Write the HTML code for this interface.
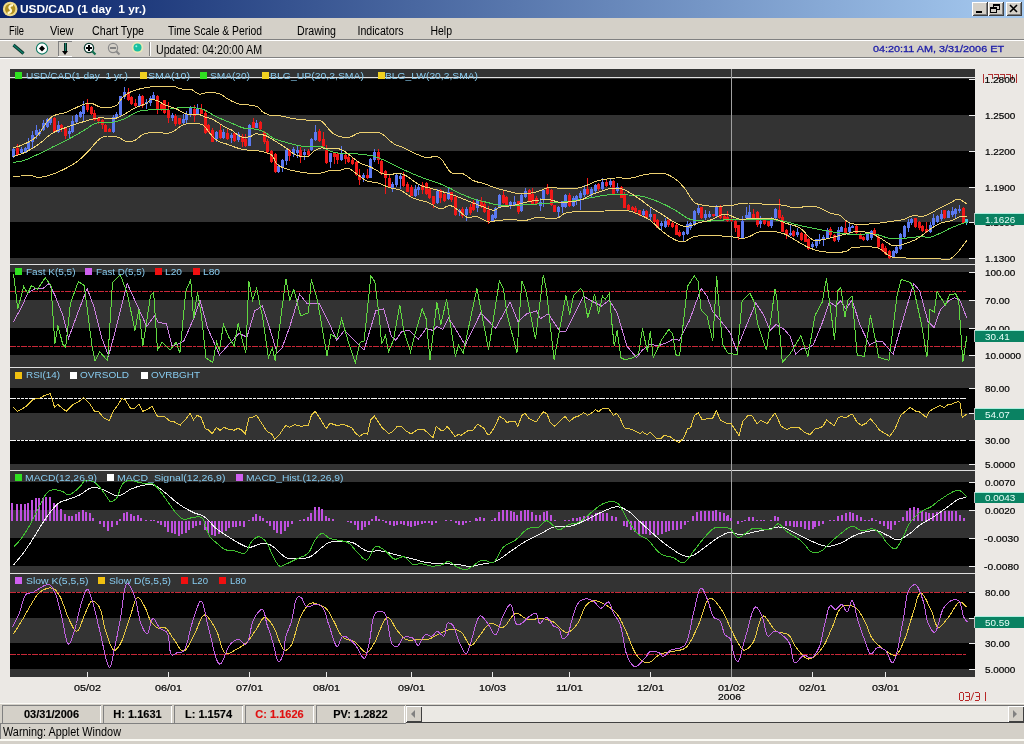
<!DOCTYPE html>
<html><head><meta charset="utf-8"><title>USD/CAD</title>
<style>
html,body{margin:0;padding:0;width:1024px;height:744px;overflow:hidden;background:#ebe8e4;}
svg{display:block;position:absolute;left:0;top:0;will-change:transform;}
text{font-family:'Liberation Sans', sans-serif;}
</style></head><body>
<svg width="1024" height="744" viewBox="0 0 1024 744" shape-rendering="crispEdges">
<defs>
<linearGradient id="tg" x1="0" x2="1" y1="0" y2="0"><stop offset="0" stop-color="#0a246a"/><stop offset="1" stop-color="#a6caf0"/></linearGradient>
<radialGradient id="coin" cx="0.4" cy="0.35" r="0.7"><stop offset="0" stop-color="#fff4a0"/><stop offset="0.6" stop-color="#d8b030"/><stop offset="1" stop-color="#8a6a10"/></radialGradient>
<radialGradient id="ball" cx="0.45" cy="0.4" r="0.6"><stop offset="0" stop-color="#60e8c8"/><stop offset="0.7" stop-color="#20b090"/><stop offset="1" stop-color="#f0f0a0"/></radialGradient>
</defs>

<rect x="0" y="0" width="1024" height="18" fill="url(#tg)"/>
<g shape-rendering="geometricPrecision"><circle cx="10.2" cy="9" r="7.3" fill="#f0dc88"/><circle cx="10.2" cy="9" r="5.2" fill="#b09020"/>
<path d="M13,5.2 C9.5,5.2 8.6,7.6 10.2,9 C11.8,10.4 11.2,12.6 7.6,13" stroke="#fff8d0" stroke-width="2.3" fill="none"/></g>
<text x="20" y="13" font-size="11" font-weight="bold" fill="#ffffff" textLength="126" lengthAdjust="spacingAndGlyphs">USD/CAD (1 day&#160; 1 yr.)</text>
<rect x="972" y="2" width="16" height="14" fill="#d4d0c8"/>
<path d="M972,16 V2 H988" stroke="#ffffff" fill="none"/>
<path d="M972.5,15.5 H987.5 V2" stroke="#404040" fill="none"/>
<path d="M973.5,14.5 H986.5 V3" stroke="#808080" fill="none"/>
<rect x="988" y="2" width="16" height="14" fill="#d4d0c8"/>
<path d="M988,16 V2 H1004" stroke="#ffffff" fill="none"/>
<path d="M988.5,15.5 H1003.5 V2" stroke="#404040" fill="none"/>
<path d="M989.5,14.5 H1002.5 V3" stroke="#808080" fill="none"/>
<rect x="1006" y="2" width="16" height="14" fill="#d4d0c8"/>
<path d="M1006,16 V2 H1022" stroke="#ffffff" fill="none"/>
<path d="M1006.5,15.5 H1021.5 V2" stroke="#404040" fill="none"/>
<path d="M1007.5,14.5 H1020.5 V3" stroke="#808080" fill="none"/>
<rect x="976" y="11" width="6" height="2" fill="#000"/>
<rect x="993" y="4" width="6" height="5" fill="none" stroke="#000" stroke-width="1"/><rect x="993" y="4" width="6" height="1.5" fill="#000"/>
<rect x="990.5" y="7.5" width="6" height="5" fill="#d4d0c8" stroke="#000" stroke-width="1"/><rect x="990" y="7" width="7" height="1.5" fill="#000"/>
<path d="M1010,5 L1017,12 M1017,5 L1010,12" stroke="#000" stroke-width="1.6" shape-rendering="geometricPrecision"/>
<rect x="0" y="18" width="1024" height="21" fill="#d4d0c8"/>
<rect x="0" y="39" width="1024" height="1" fill="#808080"/><rect x="0" y="40" width="1024" height="1" fill="#ffffff"/>
<text x="9" y="34.5" font-size="12" fill="#000" textLength="15.0" lengthAdjust="spacingAndGlyphs">File</text>
<text x="50" y="34.5" font-size="12" fill="#000" textLength="23.5" lengthAdjust="spacingAndGlyphs">View</text>
<text x="92" y="34.5" font-size="12" fill="#000" textLength="52.0" lengthAdjust="spacingAndGlyphs">Chart Type</text>
<text x="168" y="34.5" font-size="12" fill="#000" textLength="94.0" lengthAdjust="spacingAndGlyphs">Time Scale &amp; Period</text>
<text x="297" y="34.5" font-size="12" fill="#000" textLength="39.0" lengthAdjust="spacingAndGlyphs">Drawing</text>
<text x="357.5" y="34.5" font-size="12" fill="#000" textLength="46.0" lengthAdjust="spacingAndGlyphs">Indicators</text>
<text x="430.5" y="34.5" font-size="12" fill="#000" textLength="21.5" lengthAdjust="spacingAndGlyphs">Help</text>
<rect x="0" y="41" width="1024" height="16" fill="#d4d0c8"/>
<rect x="0" y="57" width="1024" height="1" fill="#808080"/><rect x="0" y="58" width="1024" height="1" fill="#ffffff"/>
<path d="M13.5,45 L23.5,53.5" stroke="#0a3028" stroke-width="3.2" shape-rendering="geometricPrecision"/>
<path d="M13.5,45 L23.5,53.5" stroke="#10806a" stroke-width="1.6" shape-rendering="geometricPrecision"/>
<circle cx="42" cy="48.5" r="5.6" fill="#fff" stroke="#107a64" stroke-width="1.1" shape-rendering="geometricPrecision"/>
<path d="M42,45.5 L45,48.5 L42,51.5 L39,48.5 Z" fill="#000" shape-rendering="geometricPrecision"/>
<path d="M58.5,56 V41.5 H72" stroke="#808080" fill="none"/><path d="M58,56.5 H72" stroke="#fff"/>
<rect x="63.5" y="43" width="3" height="9" fill="#0a2a22"/><rect x="64.5" y="43" width="1" height="9" fill="#18806a"/>
<path d="M62,51 H68 L65,55 Z" fill="#000" shape-rendering="geometricPrecision"/>
<circle cx="89" cy="48" r="4.6" fill="#fff" stroke="#0a3a30" stroke-width="1.3" shape-rendering="geometricPrecision"/>
<rect x="86" y="47" width="6" height="2" fill="#000"/><rect x="88" y="45" width="2" height="6" fill="#000"/>
<path d="M92,51 L95.5,54.5" stroke="#107050" stroke-width="2.2" shape-rendering="geometricPrecision"/>
<circle cx="113" cy="48" r="4.6" fill="none" stroke="#8a8a8a" stroke-width="1.2" shape-rendering="geometricPrecision"/><rect x="110" y="47" width="6" height="2" fill="#808080"/>
<path d="M116.2,51.2 L119.5,54.5" stroke="#8a8a8a" stroke-width="2" shape-rendering="geometricPrecision"/>
<circle cx="137.5" cy="47.5" r="5.8" fill="#f4f0b0" opacity="0.7" shape-rendering="geometricPrecision"/>
<circle cx="137.5" cy="47.5" r="4" fill="#18c0a0" shape-rendering="geometricPrecision"/><circle cx="136.3" cy="46.3" r="1" fill="#a0f0e0" shape-rendering="geometricPrecision"/>
<rect x="149" y="42" width="1" height="14" fill="#808080"/><rect x="150" y="42" width="1" height="14" fill="#fff"/>
<text x="156" y="54" font-size="12" fill="#000" textLength="106" lengthAdjust="spacingAndGlyphs">Updated: 04:20:00 AM</text>
<text x="873" y="51.6" font-size="9.2" fill="#1c1ca8" stroke="#1c1ca8" stroke-width="0.3" textLength="131" lengthAdjust="spacingAndGlyphs">04:20:11 AM, 3/31/2006 ET</text>
<rect x="10" y="69" width="965" height="608" fill="#000"/>
<rect x="10" y="69" width="965" height="10" fill="#333333"/>
<rect x="10" y="115" width="965" height="36" fill="#333333"/>
<rect x="10" y="187" width="965" height="35" fill="#333333"/>
<rect x="10" y="258" width="965" height="6" fill="#333333"/>
<rect x="10" y="264" width="965" height="8" fill="#333333"/>
<rect x="10" y="300" width="965" height="28" fill="#333333"/>
<rect x="10" y="355" width="965" height="12" fill="#333333"/>
<rect x="10" y="367" width="965" height="21" fill="#333333"/>
<rect x="10" y="413" width="965" height="27" fill="#333333"/>
<rect x="10" y="464" width="965" height="6" fill="#333333"/>
<rect x="10" y="470" width="965" height="12" fill="#333333"/>
<rect x="10" y="510" width="965" height="28" fill="#333333"/>
<rect x="10" y="566" width="965" height="7" fill="#333333"/>
<rect x="10" y="573" width="965" height="19" fill="#333333"/>
<rect x="10" y="618" width="965" height="25" fill="#333333"/>
<rect x="10" y="669" width="965" height="8" fill="#333333"/>
<rect x="10" y="77" width="965" height="1" fill="#e0e0e0"/>
<rect x="10" y="264" width="965" height="1" fill="#e0e0e0"/>
<rect x="10" y="367" width="965" height="1" fill="#e0e0e0"/>
<rect x="10" y="470" width="965" height="1" fill="#e0e0e0"/>
<rect x="10" y="573" width="965" height="1" fill="#e0e0e0"/>
<rect x="731" y="69" width="1" height="608" fill="#a0a0a0"/>
<rect x="87" y="672" width="1" height="5" fill="#e8e8e8"/>
<rect x="168" y="672" width="1" height="5" fill="#e8e8e8"/>
<rect x="249" y="672" width="1" height="5" fill="#e8e8e8"/>
<rect x="326" y="672" width="1" height="5" fill="#e8e8e8"/>
<rect x="411" y="672" width="1" height="5" fill="#e8e8e8"/>
<rect x="492" y="672" width="1" height="5" fill="#e8e8e8"/>
<rect x="569" y="672" width="1" height="5" fill="#e8e8e8"/>
<rect x="650" y="672" width="1" height="5" fill="#e8e8e8"/>
<rect x="812" y="672" width="1" height="5" fill="#e8e8e8"/>
<rect x="885" y="672" width="1" height="5" fill="#e8e8e8"/>
<rect x="969" y="79" width="6" height="1" fill="#f0f0f0"/>
<rect x="969" y="115" width="6" height="1" fill="#f0f0f0"/>
<rect x="969" y="151" width="6" height="1" fill="#f0f0f0"/>
<rect x="969" y="187" width="6" height="1" fill="#f0f0f0"/>
<rect x="969" y="222" width="6" height="1" fill="#f0f0f0"/>
<rect x="969" y="258" width="6" height="1" fill="#f0f0f0"/>
<rect x="969" y="272" width="6" height="1" fill="#f0f0f0"/>
<rect x="969" y="300" width="6" height="1" fill="#f0f0f0"/>
<rect x="969" y="328" width="6" height="1" fill="#f0f0f0"/>
<rect x="969" y="355" width="6" height="1" fill="#f0f0f0"/>
<rect x="969" y="388" width="6" height="1" fill="#f0f0f0"/>
<rect x="969" y="413" width="6" height="1" fill="#f0f0f0"/>
<rect x="969" y="440" width="6" height="1" fill="#f0f0f0"/>
<rect x="969" y="464" width="6" height="1" fill="#f0f0f0"/>
<rect x="969" y="482" width="6" height="1" fill="#f0f0f0"/>
<rect x="969" y="510" width="6" height="1" fill="#f0f0f0"/>
<rect x="969" y="538" width="6" height="1" fill="#f0f0f0"/>
<rect x="969" y="566" width="6" height="1" fill="#f0f0f0"/>
<rect x="969" y="592" width="6" height="1" fill="#f0f0f0"/>
<rect x="969" y="618" width="6" height="1" fill="#f0f0f0"/>
<rect x="969" y="643" width="6" height="1" fill="#f0f0f0"/>
<rect x="969" y="669" width="6" height="1" fill="#f0f0f0"/>
<g shape-rendering="crispEdges">
<rect x="13" y="148" width="1" height="10" fill="#5a78f0"/>
<rect x="12" y="149" width="3" height="8" fill="#5a78f0"/>
<rect x="17" y="144" width="1" height="12" fill="#f01818"/>
<rect x="16" y="148" width="3" height="7" fill="#f01818"/>
<rect x="21" y="147" width="1" height="7" fill="#5a78f0"/>
<rect x="20" y="149" width="3" height="4" fill="#5a78f0"/>
<rect x="25" y="147" width="1" height="6" fill="#5a78f0"/>
<rect x="24" y="148" width="3" height="5" fill="#5a78f0"/>
<rect x="28" y="138" width="1" height="12" fill="#5a78f0"/>
<rect x="27" y="142" width="3" height="7" fill="#5a78f0"/>
<rect x="32" y="131" width="1" height="17" fill="#5a78f0"/>
<rect x="31" y="135" width="3" height="7" fill="#5a78f0"/>
<rect x="36" y="125" width="1" height="14" fill="#5a78f0"/>
<rect x="35" y="130" width="3" height="5" fill="#5a78f0"/>
<rect x="39" y="129" width="1" height="7" fill="#5a78f0"/>
<rect x="38" y="132" width="3" height="2" fill="#5a78f0"/>
<rect x="43" y="120" width="1" height="11" fill="#5a78f0"/>
<rect x="42" y="123" width="3" height="7" fill="#5a78f0"/>
<rect x="47" y="118" width="1" height="10" fill="#5a78f0"/>
<rect x="46" y="119" width="3" height="8" fill="#5a78f0"/>
<rect x="50" y="117" width="1" height="8" fill="#5a78f0"/>
<rect x="49" y="118" width="3" height="5" fill="#5a78f0"/>
<rect x="54" y="117" width="1" height="15" fill="#f01818"/>
<rect x="53" y="118" width="3" height="14" fill="#f01818"/>
<rect x="58" y="121" width="1" height="12" fill="#5a78f0"/>
<rect x="57" y="125" width="3" height="7" fill="#5a78f0"/>
<rect x="61" y="124" width="1" height="8" fill="#f01818"/>
<rect x="60" y="125" width="3" height="3" fill="#f01818"/>
<rect x="65" y="128" width="1" height="11" fill="#f01818"/>
<rect x="64" y="128" width="3" height="8" fill="#f01818"/>
<rect x="69" y="128" width="1" height="10" fill="#5a78f0"/>
<rect x="68" y="131" width="3" height="3" fill="#5a78f0"/>
<rect x="72" y="116" width="1" height="17" fill="#5a78f0"/>
<rect x="71" y="121" width="3" height="11" fill="#5a78f0"/>
<rect x="76" y="114" width="1" height="10" fill="#5a78f0"/>
<rect x="75" y="115" width="3" height="7" fill="#5a78f0"/>
<rect x="80" y="111" width="1" height="7" fill="#5a78f0"/>
<rect x="79" y="112" width="3" height="5" fill="#5a78f0"/>
<rect x="83" y="101" width="1" height="20" fill="#5a78f0"/>
<rect x="82" y="106" width="3" height="8" fill="#5a78f0"/>
<rect x="87" y="99" width="1" height="13" fill="#f01818"/>
<rect x="86" y="104" width="3" height="6" fill="#f01818"/>
<rect x="91" y="106" width="1" height="9" fill="#f01818"/>
<rect x="90" y="107" width="3" height="7" fill="#f01818"/>
<rect x="94" y="110" width="1" height="11" fill="#f01818"/>
<rect x="93" y="113" width="3" height="7" fill="#f01818"/>
<rect x="98" y="117" width="1" height="7" fill="#f01818"/>
<rect x="97" y="118" width="3" height="3" fill="#f01818"/>
<rect x="102" y="119" width="1" height="10" fill="#f01818"/>
<rect x="101" y="120" width="3" height="5" fill="#f01818"/>
<rect x="105" y="124" width="1" height="8" fill="#f01818"/>
<rect x="104" y="125" width="3" height="7" fill="#f01818"/>
<rect x="109" y="128" width="1" height="4" fill="#f01818"/>
<rect x="108" y="129" width="3" height="3" fill="#f01818"/>
<rect x="113" y="115" width="1" height="18" fill="#5a78f0"/>
<rect x="112" y="117" width="3" height="15" fill="#5a78f0"/>
<rect x="116" y="112" width="1" height="6" fill="#5a78f0"/>
<rect x="115" y="114" width="3" height="4" fill="#5a78f0"/>
<rect x="120" y="96" width="1" height="20" fill="#5a78f0"/>
<rect x="119" y="96" width="3" height="19" fill="#5a78f0"/>
<rect x="124" y="87" width="1" height="12" fill="#5a78f0"/>
<rect x="123" y="92" width="3" height="5" fill="#5a78f0"/>
<rect x="128" y="88" width="1" height="13" fill="#f01818"/>
<rect x="127" y="92" width="3" height="8" fill="#f01818"/>
<rect x="131" y="96" width="1" height="9" fill="#f01818"/>
<rect x="130" y="97" width="3" height="7" fill="#f01818"/>
<rect x="135" y="99" width="1" height="8" fill="#f01818"/>
<rect x="134" y="103" width="3" height="3" fill="#f01818"/>
<rect x="139" y="94" width="1" height="13" fill="#5a78f0"/>
<rect x="138" y="96" width="3" height="10" fill="#5a78f0"/>
<rect x="142" y="95" width="1" height="13" fill="#f01818"/>
<rect x="141" y="96" width="3" height="10" fill="#f01818"/>
<rect x="146" y="99" width="1" height="10" fill="#5a78f0"/>
<rect x="145" y="102" width="3" height="2" fill="#5a78f0"/>
<rect x="150" y="96" width="1" height="10" fill="#5a78f0"/>
<rect x="149" y="98" width="3" height="5" fill="#5a78f0"/>
<rect x="153" y="92" width="1" height="8" fill="#5a78f0"/>
<rect x="152" y="95" width="3" height="5" fill="#5a78f0"/>
<rect x="157" y="95" width="1" height="19" fill="#f01818"/>
<rect x="156" y="96" width="3" height="14" fill="#f01818"/>
<rect x="161" y="103" width="1" height="8" fill="#f01818"/>
<rect x="160" y="104" width="3" height="5" fill="#f01818"/>
<rect x="164" y="100" width="1" height="14" fill="#f01818"/>
<rect x="163" y="100" width="3" height="13" fill="#f01818"/>
<rect x="168" y="102" width="1" height="21" fill="#f01818"/>
<rect x="167" y="110" width="3" height="8" fill="#f01818"/>
<rect x="172" y="113" width="1" height="8" fill="#5a78f0"/>
<rect x="171" y="115" width="3" height="3" fill="#5a78f0"/>
<rect x="175" y="114" width="1" height="12" fill="#f01818"/>
<rect x="174" y="116" width="3" height="8" fill="#f01818"/>
<rect x="179" y="118" width="1" height="7" fill="#f01818"/>
<rect x="178" y="118" width="3" height="6" fill="#f01818"/>
<rect x="183" y="114" width="1" height="11" fill="#5a78f0"/>
<rect x="182" y="119" width="3" height="4" fill="#5a78f0"/>
<rect x="186" y="111" width="1" height="13" fill="#5a78f0"/>
<rect x="185" y="114" width="3" height="6" fill="#5a78f0"/>
<rect x="190" y="106" width="1" height="11" fill="#5a78f0"/>
<rect x="189" y="107" width="3" height="7" fill="#5a78f0"/>
<rect x="194" y="105" width="1" height="17" fill="#f01818"/>
<rect x="193" y="109" width="3" height="7" fill="#f01818"/>
<rect x="197" y="104" width="1" height="11" fill="#5a78f0"/>
<rect x="196" y="109" width="3" height="5" fill="#5a78f0"/>
<rect x="201" y="104" width="1" height="10" fill="#f01818"/>
<rect x="200" y="109" width="3" height="5" fill="#f01818"/>
<rect x="205" y="111" width="1" height="23" fill="#f01818"/>
<rect x="204" y="113" width="3" height="20" fill="#f01818"/>
<rect x="208" y="124" width="1" height="9" fill="#f01818"/>
<rect x="207" y="125" width="3" height="7" fill="#f01818"/>
<rect x="212" y="128" width="1" height="14" fill="#f01818"/>
<rect x="211" y="130" width="3" height="12" fill="#f01818"/>
<rect x="216" y="131" width="1" height="11" fill="#5a78f0"/>
<rect x="215" y="132" width="3" height="7" fill="#5a78f0"/>
<rect x="220" y="124" width="1" height="15" fill="#f01818"/>
<rect x="219" y="130" width="3" height="8" fill="#f01818"/>
<rect x="223" y="129" width="1" height="10" fill="#5a78f0"/>
<rect x="222" y="132" width="3" height="6" fill="#5a78f0"/>
<rect x="227" y="129" width="1" height="11" fill="#f01818"/>
<rect x="226" y="133" width="3" height="6" fill="#f01818"/>
<rect x="231" y="133" width="1" height="10" fill="#5a78f0"/>
<rect x="230" y="135" width="3" height="3" fill="#5a78f0"/>
<rect x="234" y="132" width="1" height="10" fill="#f01818"/>
<rect x="233" y="133" width="3" height="8" fill="#f01818"/>
<rect x="238" y="132" width="1" height="10" fill="#5a78f0"/>
<rect x="237" y="134" width="3" height="6" fill="#5a78f0"/>
<rect x="242" y="134" width="1" height="13" fill="#f01818"/>
<rect x="241" y="136" width="3" height="6" fill="#f01818"/>
<rect x="245" y="134" width="1" height="13" fill="#f01818"/>
<rect x="244" y="139" width="3" height="7" fill="#f01818"/>
<rect x="249" y="124" width="1" height="22" fill="#5a78f0"/>
<rect x="248" y="125" width="3" height="21" fill="#5a78f0"/>
<rect x="253" y="118" width="1" height="10" fill="#f01818"/>
<rect x="252" y="122" width="3" height="6" fill="#f01818"/>
<rect x="256" y="120" width="1" height="8" fill="#5a78f0"/>
<rect x="255" y="123" width="3" height="5" fill="#5a78f0"/>
<rect x="260" y="121" width="1" height="9" fill="#f01818"/>
<rect x="259" y="122" width="3" height="7" fill="#f01818"/>
<rect x="264" y="131" width="1" height="13" fill="#f01818"/>
<rect x="263" y="132" width="3" height="10" fill="#f01818"/>
<rect x="267" y="139" width="1" height="14" fill="#f01818"/>
<rect x="266" y="141" width="3" height="11" fill="#f01818"/>
<rect x="271" y="150" width="1" height="13" fill="#f01818"/>
<rect x="270" y="151" width="3" height="11" fill="#f01818"/>
<rect x="275" y="153" width="1" height="20" fill="#f01818"/>
<rect x="274" y="154" width="3" height="18" fill="#f01818"/>
<rect x="278" y="164" width="1" height="9" fill="#5a78f0"/>
<rect x="277" y="166" width="3" height="6" fill="#5a78f0"/>
<rect x="282" y="159" width="1" height="13" fill="#5a78f0"/>
<rect x="281" y="160" width="3" height="7" fill="#5a78f0"/>
<rect x="286" y="149" width="1" height="16" fill="#5a78f0"/>
<rect x="285" y="150" width="3" height="11" fill="#5a78f0"/>
<rect x="289" y="149" width="1" height="12" fill="#f01818"/>
<rect x="288" y="150" width="3" height="6" fill="#f01818"/>
<rect x="293" y="147" width="1" height="10" fill="#5a78f0"/>
<rect x="292" y="149" width="3" height="5" fill="#5a78f0"/>
<rect x="297" y="146" width="1" height="12" fill="#5a78f0"/>
<rect x="296" y="150" width="3" height="3" fill="#5a78f0"/>
<rect x="300" y="147" width="1" height="16" fill="#f01818"/>
<rect x="299" y="150" width="3" height="7" fill="#f01818"/>
<rect x="304" y="149" width="1" height="11" fill="#5a78f0"/>
<rect x="303" y="152" width="3" height="3" fill="#5a78f0"/>
<rect x="308" y="149" width="1" height="7" fill="#f01818"/>
<rect x="307" y="151" width="3" height="4" fill="#f01818"/>
<rect x="311" y="138" width="1" height="13" fill="#5a78f0"/>
<rect x="310" y="139" width="3" height="11" fill="#5a78f0"/>
<rect x="315" y="125" width="1" height="16" fill="#5a78f0"/>
<rect x="314" y="132" width="3" height="8" fill="#5a78f0"/>
<rect x="319" y="129" width="1" height="13" fill="#f01818"/>
<rect x="318" y="131" width="3" height="10" fill="#f01818"/>
<rect x="323" y="132" width="1" height="16" fill="#f01818"/>
<rect x="322" y="139" width="3" height="7" fill="#f01818"/>
<rect x="326" y="145" width="1" height="19" fill="#f01818"/>
<rect x="325" y="150" width="3" height="13" fill="#f01818"/>
<rect x="330" y="153" width="1" height="15" fill="#5a78f0"/>
<rect x="329" y="153" width="3" height="9" fill="#5a78f0"/>
<rect x="334" y="152" width="1" height="12" fill="#f01818"/>
<rect x="333" y="153" width="3" height="4" fill="#f01818"/>
<rect x="337" y="153" width="1" height="11" fill="#f01818"/>
<rect x="336" y="154" width="3" height="6" fill="#f01818"/>
<rect x="341" y="146" width="1" height="15" fill="#5a78f0"/>
<rect x="340" y="154" width="3" height="6" fill="#5a78f0"/>
<rect x="345" y="153" width="1" height="11" fill="#f01818"/>
<rect x="344" y="155" width="3" height="4" fill="#f01818"/>
<rect x="348" y="154" width="1" height="9" fill="#f01818"/>
<rect x="347" y="157" width="3" height="5" fill="#f01818"/>
<rect x="352" y="157" width="1" height="8" fill="#f01818"/>
<rect x="351" y="160" width="3" height="4" fill="#f01818"/>
<rect x="356" y="161" width="1" height="15" fill="#f01818"/>
<rect x="355" y="162" width="3" height="13" fill="#f01818"/>
<rect x="359" y="169" width="1" height="16" fill="#f01818"/>
<rect x="358" y="175" width="3" height="5" fill="#f01818"/>
<rect x="363" y="173" width="1" height="9" fill="#5a78f0"/>
<rect x="362" y="175" width="3" height="3" fill="#5a78f0"/>
<rect x="367" y="169" width="1" height="10" fill="#f01818"/>
<rect x="366" y="175" width="3" height="3" fill="#f01818"/>
<rect x="370" y="158" width="1" height="20" fill="#5a78f0"/>
<rect x="369" y="159" width="3" height="19" fill="#5a78f0"/>
<rect x="374" y="149" width="1" height="13" fill="#5a78f0"/>
<rect x="373" y="152" width="3" height="8" fill="#5a78f0"/>
<rect x="378" y="149" width="1" height="15" fill="#f01818"/>
<rect x="377" y="152" width="3" height="8" fill="#f01818"/>
<rect x="381" y="160" width="1" height="15" fill="#f01818"/>
<rect x="380" y="161" width="3" height="13" fill="#f01818"/>
<rect x="385" y="170" width="1" height="24" fill="#f01818"/>
<rect x="384" y="171" width="3" height="7" fill="#f01818"/>
<rect x="389" y="174" width="1" height="14" fill="#f01818"/>
<rect x="388" y="178" width="3" height="9" fill="#f01818"/>
<rect x="392" y="182" width="1" height="10" fill="#5a78f0"/>
<rect x="391" y="184" width="3" height="4" fill="#5a78f0"/>
<rect x="396" y="174" width="1" height="13" fill="#5a78f0"/>
<rect x="395" y="175" width="3" height="10" fill="#5a78f0"/>
<rect x="400" y="174" width="1" height="15" fill="#5a78f0"/>
<rect x="399" y="176" width="3" height="3" fill="#5a78f0"/>
<rect x="403" y="172" width="1" height="15" fill="#f01818"/>
<rect x="402" y="176" width="3" height="10" fill="#f01818"/>
<rect x="407" y="182" width="1" height="10" fill="#f01818"/>
<rect x="406" y="184" width="3" height="8" fill="#f01818"/>
<rect x="411" y="185" width="1" height="11" fill="#f01818"/>
<rect x="410" y="187" width="3" height="9" fill="#f01818"/>
<rect x="415" y="185" width="1" height="12" fill="#5a78f0"/>
<rect x="414" y="189" width="3" height="7" fill="#5a78f0"/>
<rect x="418" y="185" width="1" height="10" fill="#5a78f0"/>
<rect x="417" y="187" width="3" height="3" fill="#5a78f0"/>
<rect x="422" y="182" width="1" height="12" fill="#f01818"/>
<rect x="421" y="185" width="3" height="5" fill="#f01818"/>
<rect x="426" y="182" width="1" height="13" fill="#f01818"/>
<rect x="425" y="183" width="3" height="11" fill="#f01818"/>
<rect x="429" y="188" width="1" height="11" fill="#f01818"/>
<rect x="428" y="189" width="3" height="9" fill="#f01818"/>
<rect x="433" y="196" width="1" height="12" fill="#f01818"/>
<rect x="432" y="196" width="3" height="8" fill="#f01818"/>
<rect x="437" y="189" width="1" height="15" fill="#5a78f0"/>
<rect x="436" y="191" width="3" height="12" fill="#5a78f0"/>
<rect x="440" y="189" width="1" height="14" fill="#f01818"/>
<rect x="439" y="190" width="3" height="8" fill="#f01818"/>
<rect x="444" y="192" width="1" height="10" fill="#f01818"/>
<rect x="443" y="194" width="3" height="7" fill="#f01818"/>
<rect x="448" y="188" width="1" height="12" fill="#5a78f0"/>
<rect x="447" y="192" width="3" height="7" fill="#5a78f0"/>
<rect x="451" y="192" width="1" height="10" fill="#f01818"/>
<rect x="450" y="192" width="3" height="8" fill="#f01818"/>
<rect x="455" y="196" width="1" height="20" fill="#f01818"/>
<rect x="454" y="197" width="3" height="18" fill="#f01818"/>
<rect x="459" y="209" width="1" height="7" fill="#5a78f0"/>
<rect x="458" y="210" width="3" height="2" fill="#5a78f0"/>
<rect x="462" y="207" width="1" height="11" fill="#f01818"/>
<rect x="461" y="209" width="3" height="7" fill="#f01818"/>
<rect x="466" y="207" width="1" height="14" fill="#5a78f0"/>
<rect x="465" y="209" width="3" height="6" fill="#5a78f0"/>
<rect x="470" y="204" width="1" height="11" fill="#f01818"/>
<rect x="469" y="207" width="3" height="6" fill="#f01818"/>
<rect x="473" y="200" width="1" height="11" fill="#f01818"/>
<rect x="472" y="202" width="3" height="8" fill="#f01818"/>
<rect x="477" y="199" width="1" height="13" fill="#5a78f0"/>
<rect x="476" y="200" width="3" height="8" fill="#5a78f0"/>
<rect x="481" y="197" width="1" height="11" fill="#f01818"/>
<rect x="480" y="201" width="3" height="6" fill="#f01818"/>
<rect x="484" y="202" width="1" height="11" fill="#f01818"/>
<rect x="483" y="204" width="3" height="8" fill="#f01818"/>
<rect x="488" y="206" width="1" height="18" fill="#f01818"/>
<rect x="487" y="210" width="3" height="11" fill="#f01818"/>
<rect x="492" y="214" width="1" height="8" fill="#5a78f0"/>
<rect x="491" y="215" width="3" height="6" fill="#5a78f0"/>
<rect x="495" y="207" width="1" height="12" fill="#5a78f0"/>
<rect x="494" y="208" width="3" height="10" fill="#5a78f0"/>
<rect x="499" y="194" width="1" height="14" fill="#5a78f0"/>
<rect x="498" y="195" width="3" height="13" fill="#5a78f0"/>
<rect x="503" y="191" width="1" height="13" fill="#f01818"/>
<rect x="502" y="195" width="3" height="8" fill="#f01818"/>
<rect x="506" y="196" width="1" height="9" fill="#f01818"/>
<rect x="505" y="197" width="3" height="8" fill="#f01818"/>
<rect x="510" y="201" width="1" height="8" fill="#5a78f0"/>
<rect x="509" y="202" width="3" height="4" fill="#5a78f0"/>
<rect x="514" y="196" width="1" height="10" fill="#5a78f0"/>
<rect x="513" y="202" width="3" height="3" fill="#5a78f0"/>
<rect x="518" y="201" width="1" height="13" fill="#f01818"/>
<rect x="517" y="201" width="3" height="11" fill="#f01818"/>
<rect x="521" y="194" width="1" height="18" fill="#5a78f0"/>
<rect x="520" y="195" width="3" height="16" fill="#5a78f0"/>
<rect x="525" y="188" width="1" height="10" fill="#5a78f0"/>
<rect x="524" y="191" width="3" height="6" fill="#5a78f0"/>
<rect x="529" y="189" width="1" height="12" fill="#f01818"/>
<rect x="528" y="190" width="3" height="11" fill="#f01818"/>
<rect x="532" y="188" width="1" height="17" fill="#f01818"/>
<rect x="531" y="194" width="3" height="10" fill="#f01818"/>
<rect x="536" y="196" width="1" height="9" fill="#f01818"/>
<rect x="535" y="198" width="3" height="6" fill="#f01818"/>
<rect x="540" y="198" width="1" height="13" fill="#5a78f0"/>
<rect x="539" y="202" width="3" height="4" fill="#5a78f0"/>
<rect x="543" y="189" width="1" height="18" fill="#5a78f0"/>
<rect x="542" y="190" width="3" height="9" fill="#5a78f0"/>
<rect x="547" y="184" width="1" height="11" fill="#f01818"/>
<rect x="546" y="187" width="3" height="7" fill="#f01818"/>
<rect x="551" y="189" width="1" height="17" fill="#f01818"/>
<rect x="550" y="190" width="3" height="15" fill="#f01818"/>
<rect x="554" y="205" width="1" height="7" fill="#f01818"/>
<rect x="553" y="205" width="3" height="7" fill="#f01818"/>
<rect x="558" y="206" width="1" height="11" fill="#5a78f0"/>
<rect x="557" y="207" width="3" height="5" fill="#5a78f0"/>
<rect x="562" y="201" width="1" height="12" fill="#5a78f0"/>
<rect x="561" y="201" width="3" height="6" fill="#5a78f0"/>
<rect x="565" y="194" width="1" height="14" fill="#5a78f0"/>
<rect x="564" y="195" width="3" height="12" fill="#5a78f0"/>
<rect x="569" y="193" width="1" height="14" fill="#f01818"/>
<rect x="568" y="195" width="3" height="11" fill="#f01818"/>
<rect x="573" y="196" width="1" height="11" fill="#5a78f0"/>
<rect x="572" y="198" width="3" height="8" fill="#5a78f0"/>
<rect x="576" y="195" width="1" height="10" fill="#5a78f0"/>
<rect x="575" y="196" width="3" height="4" fill="#5a78f0"/>
<rect x="580" y="191" width="1" height="19" fill="#5a78f0"/>
<rect x="579" y="193" width="3" height="5" fill="#5a78f0"/>
<rect x="584" y="185" width="1" height="12" fill="#5a78f0"/>
<rect x="583" y="189" width="3" height="6" fill="#5a78f0"/>
<rect x="587" y="178" width="1" height="17" fill="#f01818"/>
<rect x="586" y="189" width="3" height="5" fill="#f01818"/>
<rect x="591" y="187" width="1" height="10" fill="#5a78f0"/>
<rect x="590" y="189" width="3" height="6" fill="#5a78f0"/>
<rect x="595" y="184" width="1" height="10" fill="#5a78f0"/>
<rect x="594" y="185" width="3" height="6" fill="#5a78f0"/>
<rect x="598" y="183" width="1" height="8" fill="#f01818"/>
<rect x="597" y="184" width="3" height="5" fill="#f01818"/>
<rect x="602" y="178" width="1" height="12" fill="#5a78f0"/>
<rect x="601" y="182" width="3" height="7" fill="#5a78f0"/>
<rect x="606" y="179" width="1" height="8" fill="#f01818"/>
<rect x="605" y="182" width="3" height="4" fill="#f01818"/>
<rect x="610" y="178" width="1" height="9" fill="#5a78f0"/>
<rect x="609" y="181" width="3" height="4" fill="#5a78f0"/>
<rect x="613" y="180" width="1" height="14" fill="#f01818"/>
<rect x="612" y="181" width="3" height="13" fill="#f01818"/>
<rect x="617" y="183" width="1" height="10" fill="#5a78f0"/>
<rect x="616" y="187" width="3" height="4" fill="#5a78f0"/>
<rect x="621" y="186" width="1" height="12" fill="#f01818"/>
<rect x="620" y="187" width="3" height="11" fill="#f01818"/>
<rect x="624" y="192" width="1" height="16" fill="#f01818"/>
<rect x="623" y="194" width="3" height="14" fill="#f01818"/>
<rect x="628" y="204" width="1" height="7" fill="#f01818"/>
<rect x="627" y="205" width="3" height="5" fill="#f01818"/>
<rect x="632" y="206" width="1" height="5" fill="#f01818"/>
<rect x="631" y="207" width="3" height="3" fill="#f01818"/>
<rect x="635" y="206" width="1" height="8" fill="#f01818"/>
<rect x="634" y="208" width="3" height="4" fill="#f01818"/>
<rect x="639" y="210" width="1" height="6" fill="#f01818"/>
<rect x="638" y="210" width="3" height="5" fill="#f01818"/>
<rect x="643" y="209" width="1" height="8" fill="#5a78f0"/>
<rect x="642" y="211" width="3" height="4" fill="#5a78f0"/>
<rect x="646" y="210" width="1" height="9" fill="#f01818"/>
<rect x="645" y="211" width="3" height="7" fill="#f01818"/>
<rect x="650" y="208" width="1" height="13" fill="#5a78f0"/>
<rect x="649" y="214" width="3" height="3" fill="#5a78f0"/>
<rect x="654" y="214" width="1" height="9" fill="#f01818"/>
<rect x="653" y="214" width="3" height="8" fill="#f01818"/>
<rect x="657" y="219" width="1" height="9" fill="#f01818"/>
<rect x="656" y="220" width="3" height="8" fill="#f01818"/>
<rect x="661" y="221" width="1" height="10" fill="#5a78f0"/>
<rect x="660" y="223" width="3" height="3" fill="#5a78f0"/>
<rect x="665" y="218" width="1" height="10" fill="#5a78f0"/>
<rect x="664" y="221" width="3" height="6" fill="#5a78f0"/>
<rect x="668" y="219" width="1" height="8" fill="#f01818"/>
<rect x="667" y="220" width="3" height="5" fill="#f01818"/>
<rect x="672" y="221" width="1" height="7" fill="#f01818"/>
<rect x="671" y="223" width="3" height="4" fill="#f01818"/>
<rect x="676" y="224" width="1" height="11" fill="#f01818"/>
<rect x="675" y="225" width="3" height="10" fill="#f01818"/>
<rect x="679" y="230" width="1" height="7" fill="#f01818"/>
<rect x="678" y="232" width="3" height="4" fill="#f01818"/>
<rect x="683" y="231" width="1" height="11" fill="#5a78f0"/>
<rect x="682" y="232" width="3" height="3" fill="#5a78f0"/>
<rect x="687" y="221" width="1" height="14" fill="#5a78f0"/>
<rect x="686" y="224" width="3" height="10" fill="#5a78f0"/>
<rect x="690" y="222" width="1" height="8" fill="#5a78f0"/>
<rect x="689" y="223" width="3" height="5" fill="#5a78f0"/>
<rect x="694" y="210" width="1" height="16" fill="#5a78f0"/>
<rect x="693" y="211" width="3" height="14" fill="#5a78f0"/>
<rect x="698" y="204" width="1" height="11" fill="#5a78f0"/>
<rect x="697" y="208" width="3" height="5" fill="#5a78f0"/>
<rect x="701" y="207" width="1" height="12" fill="#f01818"/>
<rect x="700" y="207" width="3" height="11" fill="#f01818"/>
<rect x="705" y="210" width="1" height="10" fill="#5a78f0"/>
<rect x="704" y="214" width="3" height="4" fill="#5a78f0"/>
<rect x="709" y="211" width="1" height="7" fill="#5a78f0"/>
<rect x="708" y="214" width="3" height="3" fill="#5a78f0"/>
<rect x="713" y="214" width="1" height="3" fill="#f01818"/>
<rect x="712" y="214" width="3" height="2" fill="#f01818"/>
<rect x="716" y="205" width="1" height="12" fill="#5a78f0"/>
<rect x="715" y="206" width="3" height="10" fill="#5a78f0"/>
<rect x="720" y="205" width="1" height="14" fill="#f01818"/>
<rect x="719" y="206" width="3" height="12" fill="#f01818"/>
<rect x="724" y="214" width="1" height="6" fill="#f01818"/>
<rect x="723" y="216" width="3" height="3" fill="#f01818"/>
<rect x="727" y="211" width="1" height="11" fill="#f01818"/>
<rect x="726" y="217" width="3" height="4" fill="#f01818"/>
<rect x="731" y="218" width="1" height="4" fill="#f01818"/>
<rect x="730" y="219" width="3" height="2" fill="#f01818"/>
<rect x="735" y="220" width="1" height="12" fill="#f01818"/>
<rect x="734" y="221" width="3" height="7" fill="#f01818"/>
<rect x="738" y="225" width="1" height="15" fill="#f01818"/>
<rect x="737" y="225" width="3" height="12" fill="#f01818"/>
<rect x="742" y="216" width="1" height="23" fill="#5a78f0"/>
<rect x="741" y="221" width="3" height="17" fill="#5a78f0"/>
<rect x="746" y="207" width="1" height="12" fill="#5a78f0"/>
<rect x="745" y="215" width="3" height="3" fill="#5a78f0"/>
<rect x="749" y="205" width="1" height="13" fill="#5a78f0"/>
<rect x="748" y="212" width="3" height="6" fill="#5a78f0"/>
<rect x="753" y="209" width="1" height="10" fill="#f01818"/>
<rect x="752" y="214" width="3" height="4" fill="#f01818"/>
<rect x="757" y="211" width="1" height="16" fill="#f01818"/>
<rect x="756" y="212" width="3" height="13" fill="#f01818"/>
<rect x="760" y="216" width="1" height="12" fill="#5a78f0"/>
<rect x="759" y="221" width="3" height="3" fill="#5a78f0"/>
<rect x="764" y="218" width="1" height="7" fill="#f01818"/>
<rect x="763" y="219" width="3" height="5" fill="#f01818"/>
<rect x="768" y="221" width="1" height="6" fill="#f01818"/>
<rect x="767" y="221" width="3" height="5" fill="#f01818"/>
<rect x="771" y="217" width="1" height="11" fill="#5a78f0"/>
<rect x="770" y="219" width="3" height="7" fill="#5a78f0"/>
<rect x="775" y="208" width="1" height="11" fill="#5a78f0"/>
<rect x="774" y="209" width="3" height="9" fill="#5a78f0"/>
<rect x="779" y="199" width="1" height="20" fill="#f01818"/>
<rect x="778" y="210" width="3" height="8" fill="#f01818"/>
<rect x="782" y="215" width="1" height="17" fill="#f01818"/>
<rect x="781" y="217" width="3" height="15" fill="#f01818"/>
<rect x="786" y="229" width="1" height="10" fill="#f01818"/>
<rect x="785" y="230" width="3" height="5" fill="#f01818"/>
<rect x="790" y="225" width="1" height="11" fill="#5a78f0"/>
<rect x="789" y="233" width="3" height="2" fill="#5a78f0"/>
<rect x="793" y="230" width="1" height="7" fill="#f01818"/>
<rect x="792" y="231" width="3" height="5" fill="#f01818"/>
<rect x="797" y="228" width="1" height="9" fill="#5a78f0"/>
<rect x="796" y="232" width="3" height="3" fill="#5a78f0"/>
<rect x="801" y="232" width="1" height="9" fill="#f01818"/>
<rect x="800" y="233" width="3" height="7" fill="#f01818"/>
<rect x="805" y="233" width="1" height="9" fill="#f01818"/>
<rect x="804" y="234" width="3" height="8" fill="#f01818"/>
<rect x="808" y="238" width="1" height="12" fill="#f01818"/>
<rect x="807" y="239" width="3" height="10" fill="#f01818"/>
<rect x="812" y="242" width="1" height="6" fill="#5a78f0"/>
<rect x="811" y="244" width="3" height="3" fill="#5a78f0"/>
<rect x="816" y="239" width="1" height="9" fill="#5a78f0"/>
<rect x="815" y="239" width="3" height="7" fill="#5a78f0"/>
<rect x="819" y="234" width="1" height="10" fill="#5a78f0"/>
<rect x="818" y="239" width="3" height="2" fill="#5a78f0"/>
<rect x="823" y="235" width="1" height="11" fill="#5a78f0"/>
<rect x="822" y="237" width="3" height="3" fill="#5a78f0"/>
<rect x="827" y="228" width="1" height="11" fill="#5a78f0"/>
<rect x="826" y="230" width="3" height="9" fill="#5a78f0"/>
<rect x="830" y="227" width="1" height="10" fill="#f01818"/>
<rect x="829" y="229" width="3" height="6" fill="#f01818"/>
<rect x="834" y="234" width="1" height="8" fill="#f01818"/>
<rect x="833" y="235" width="3" height="6" fill="#f01818"/>
<rect x="838" y="227" width="1" height="15" fill="#5a78f0"/>
<rect x="837" y="230" width="3" height="10" fill="#5a78f0"/>
<rect x="841" y="226" width="1" height="6" fill="#5a78f0"/>
<rect x="840" y="227" width="3" height="5" fill="#5a78f0"/>
<rect x="845" y="221" width="1" height="13" fill="#f01818"/>
<rect x="844" y="228" width="3" height="5" fill="#f01818"/>
<rect x="849" y="223" width="1" height="12" fill="#5a78f0"/>
<rect x="848" y="227" width="3" height="5" fill="#5a78f0"/>
<rect x="852" y="225" width="1" height="3" fill="#5a78f0"/>
<rect x="851" y="226" width="3" height="2" fill="#5a78f0"/>
<rect x="856" y="225" width="1" height="9" fill="#f01818"/>
<rect x="855" y="226" width="3" height="7" fill="#f01818"/>
<rect x="860" y="233" width="1" height="6" fill="#f01818"/>
<rect x="859" y="234" width="3" height="5" fill="#f01818"/>
<rect x="863" y="236" width="1" height="5" fill="#f01818"/>
<rect x="862" y="237" width="3" height="3" fill="#f01818"/>
<rect x="867" y="233" width="1" height="8" fill="#5a78f0"/>
<rect x="866" y="234" width="3" height="6" fill="#5a78f0"/>
<rect x="871" y="230" width="1" height="10" fill="#5a78f0"/>
<rect x="870" y="231" width="3" height="7" fill="#5a78f0"/>
<rect x="874" y="228" width="1" height="8" fill="#f01818"/>
<rect x="873" y="230" width="3" height="5" fill="#f01818"/>
<rect x="878" y="236" width="1" height="13" fill="#f01818"/>
<rect x="877" y="237" width="3" height="10" fill="#f01818"/>
<rect x="882" y="243" width="1" height="9" fill="#f01818"/>
<rect x="881" y="244" width="3" height="7" fill="#f01818"/>
<rect x="885" y="246" width="1" height="9" fill="#f01818"/>
<rect x="884" y="248" width="3" height="6" fill="#f01818"/>
<rect x="889" y="250" width="1" height="9" fill="#f01818"/>
<rect x="888" y="251" width="3" height="7" fill="#f01818"/>
<rect x="893" y="250" width="1" height="7" fill="#5a78f0"/>
<rect x="892" y="251" width="3" height="6" fill="#5a78f0"/>
<rect x="896" y="246" width="1" height="8" fill="#5a78f0"/>
<rect x="895" y="247" width="3" height="6" fill="#5a78f0"/>
<rect x="900" y="233" width="1" height="17" fill="#5a78f0"/>
<rect x="899" y="234" width="3" height="15" fill="#5a78f0"/>
<rect x="904" y="225" width="1" height="13" fill="#5a78f0"/>
<rect x="903" y="226" width="3" height="11" fill="#5a78f0"/>
<rect x="908" y="219" width="1" height="13" fill="#5a78f0"/>
<rect x="907" y="222" width="3" height="6" fill="#5a78f0"/>
<rect x="911" y="218" width="1" height="7" fill="#5a78f0"/>
<rect x="910" y="219" width="3" height="4" fill="#5a78f0"/>
<rect x="915" y="218" width="1" height="10" fill="#f01818"/>
<rect x="914" y="218" width="3" height="9" fill="#f01818"/>
<rect x="919" y="221" width="1" height="9" fill="#f01818"/>
<rect x="918" y="222" width="3" height="6" fill="#f01818"/>
<rect x="922" y="225" width="1" height="7" fill="#f01818"/>
<rect x="921" y="226" width="3" height="5" fill="#f01818"/>
<rect x="926" y="222" width="1" height="11" fill="#f01818"/>
<rect x="925" y="229" width="3" height="3" fill="#f01818"/>
<rect x="930" y="222" width="1" height="11" fill="#5a78f0"/>
<rect x="929" y="225" width="3" height="7" fill="#5a78f0"/>
<rect x="933" y="214" width="1" height="12" fill="#5a78f0"/>
<rect x="932" y="218" width="3" height="7" fill="#5a78f0"/>
<rect x="937" y="215" width="1" height="8" fill="#5a78f0"/>
<rect x="936" y="216" width="3" height="6" fill="#5a78f0"/>
<rect x="941" y="210" width="1" height="11" fill="#5a78f0"/>
<rect x="940" y="214" width="3" height="5" fill="#5a78f0"/>
<rect x="944" y="210" width="1" height="9" fill="#f01818"/>
<rect x="943" y="210" width="3" height="8" fill="#f01818"/>
<rect x="948" y="210" width="1" height="8" fill="#5a78f0"/>
<rect x="947" y="211" width="3" height="7" fill="#5a78f0"/>
<rect x="952" y="207" width="1" height="10" fill="#5a78f0"/>
<rect x="951" y="211" width="3" height="4" fill="#5a78f0"/>
<rect x="955" y="208" width="1" height="10" fill="#5a78f0"/>
<rect x="954" y="209" width="3" height="5" fill="#5a78f0"/>
<rect x="959" y="205" width="1" height="8" fill="#5a78f0"/>
<rect x="958" y="209" width="3" height="2" fill="#5a78f0"/>
<rect x="963" y="207" width="1" height="17" fill="#f01818"/>
<rect x="962" y="208" width="3" height="15" fill="#f01818"/>
<rect x="966" y="219" width="1" height="6" fill="#40c8e0"/>
<rect x="965" y="219" width="3" height="4" fill="#40c8e0"/>
</g>
<g fill="none" stroke-width="1" shape-rendering="crispEdges">
<polyline points="13.2,176.5 14.2,176.4 16.9,176.2 20.7,176.0 24.7,175.8 28.6,175.7 31.5,175.8 32.8,176.0 33.8,176.3 34.8,176.7 35.8,177.0 36.8,177.3 38.0,177.4 39.9,177.3 42.0,177.0 44.2,176.6 46.5,176.1 48.7,175.4 50.9,174.8 53.1,174.1 55.2,173.3 57.4,172.4 59.5,171.4 61.7,170.4 63.8,169.4 66.0,168.3 68.2,167.1 70.4,165.9 72.6,164.6 74.7,163.3 76.7,161.9 78.6,160.4 80.4,158.9 82.1,157.3 83.8,155.7 85.5,154.0 87.4,152.2 89.7,149.7 92.2,146.8 94.6,143.8 97.2,141.1 99.8,138.7 102.5,137.1 104.9,136.4 107.5,136.0 110.2,136.0 112.8,136.2 115.2,136.6 117.5,137.1 119.1,137.7 120.6,138.5 122.0,139.4 123.3,140.2 124.7,141.0 126.1,141.4 127.5,141.6 129.0,141.6 130.4,141.5 131.9,141.2 133.3,140.9 134.7,140.4 136.2,139.6 137.6,138.6 138.9,137.4 140.3,136.2 141.8,135.1 143.3,134.3 145.0,133.7 146.7,133.3 148.4,133.0 150.3,132.7 152.2,132.5 154.1,132.4 156.6,132.4 159.2,132.6 161.9,132.9 164.7,133.2 167.4,133.2 170.0,132.8 172.6,131.8 175.0,130.3 177.5,128.5 179.9,126.8 182.4,125.3 185.0,124.2 187.8,123.7 190.9,123.5 194.0,123.4 197.0,123.6 199.6,124.0 201.6,124.5 202.3,124.8 202.9,125.1 203.5,125.5 203.9,125.9 204.4,126.4 205.0,127.0 206.2,128.3 207.5,130.0 208.9,131.9 210.3,133.8 211.7,135.5 213.0,137.0 213.8,137.8 214.7,138.6 215.4,139.3 216.2,139.9 217.1,140.5 218.0,141.0 219.0,141.5 220.1,141.9 221.2,142.3 222.4,142.7 223.6,143.1 225.0,143.5 227.3,144.3 229.9,145.3 232.7,146.4 235.6,147.4 238.4,148.3 241.0,149.0 243.1,149.5 245.2,149.8 247.3,150.1 249.3,150.3 251.2,150.5 253.0,150.7 254.3,150.8 255.5,150.8 256.6,150.9 257.8,150.9 258.9,151.0 260.0,151.1 261.1,151.3 262.1,151.5 263.2,151.8 264.2,152.1 265.2,152.4 266.2,152.7 267.2,153.0 268.1,153.3 269.1,153.6 270.0,153.9 270.9,154.4 271.7,155.0 272.7,156.2 273.6,157.8 274.5,159.6 275.3,161.4 276.2,163.1 277.2,164.4 278.0,165.1 278.9,165.7 279.8,166.2 280.7,166.6 281.7,167.1 282.7,167.5 284.2,168.1 285.7,168.6 287.4,169.2 289.2,169.7 291.0,170.2 292.8,170.6 295.0,171.1 297.3,171.6 299.7,172.0 302.1,172.4 304.5,172.8 306.9,173.0 309.3,173.2 311.7,173.3 314.1,173.3 316.5,173.3 318.7,173.2 320.9,173.0 322.6,172.7 324.2,172.3 325.7,171.8 327.2,171.3 328.7,170.9 330.3,170.6 331.9,170.4 333.6,170.4 335.2,170.4 336.8,170.4 338.4,170.3 340.0,170.2 341.4,169.9 342.7,169.5 344.1,169.0 345.4,168.6 346.6,168.4 347.9,168.4 349.1,168.7 350.3,169.3 351.4,170.0 352.6,170.8 353.7,171.7 355.0,172.6 356.8,173.9 358.7,175.3 360.6,176.9 362.6,178.4 364.7,179.7 366.7,180.8 368.6,181.4 370.5,181.9 372.5,182.1 374.5,182.4 376.5,182.6 378.4,183.1 380.4,183.8 382.4,184.6 384.3,185.5 386.3,186.3 388.2,187.1 390.1,187.8 391.8,188.2 393.4,188.5 395.1,188.8 396.7,189.1 398.3,189.4 400.0,190.0 402.0,191.0 404.0,192.3 406.1,193.8 408.1,195.2 410.3,196.6 412.5,197.8 415.0,198.8 417.6,199.6 420.3,200.2 423.0,200.9 425.6,201.6 428.1,202.5 430.3,203.6 432.5,204.8 434.6,206.2 436.6,207.4 438.6,208.3 440.6,208.8 442.2,208.6 443.8,208.0 445.4,207.1 446.9,206.3 448.5,205.7 450.0,205.6 451.6,206.0 453.2,206.7 454.8,207.7 456.4,208.9 457.9,210.0 459.4,211.1 460.7,212.2 462.0,213.4 463.3,214.6 464.5,215.7 465.8,216.7 467.2,217.3 468.7,217.5 470.2,217.4 471.7,217.1 473.3,216.7 475.0,216.5 476.6,216.6 478.6,217.2 480.7,218.2 482.9,219.4 485.0,220.6 487.1,221.5 489.0,222.0 490.4,222.0 491.6,221.8 492.9,221.5 494.1,221.1 495.4,220.8 496.9,220.5 499.2,220.3 501.8,220.1 504.5,219.9 507.2,219.8 509.9,219.7 512.5,219.7 514.7,219.8 516.8,220.0 518.8,220.3 520.9,220.5 522.9,220.6 525.0,220.5 527.1,220.1 529.2,219.6 531.3,218.9 533.3,218.2 535.4,217.6 537.5,217.3 539.6,217.3 541.8,217.5 543.9,217.8 546.0,218.2 548.1,218.5 550.0,218.6 551.4,218.6 552.8,218.6 554.0,218.5 555.3,218.4 556.6,218.2 557.8,217.8 559.1,217.2 560.3,216.4 561.4,215.5 562.6,214.6 564.0,213.8 565.6,213.1 568.7,212.4 572.4,212.0 576.5,211.8 580.7,211.8 584.9,211.7 589.0,211.6 593.0,211.4 597.0,211.2 601.0,211.1 605.0,211.0 608.9,210.9 612.5,210.8 615.3,210.7 618.1,210.6 620.8,210.5 623.3,210.5 625.8,210.5 628.1,210.8 629.8,211.1 631.4,211.6 632.9,212.1 634.4,212.6 635.9,213.2 637.5,213.9 639.5,214.8 641.7,215.7 643.8,216.7 646.0,217.8 648.1,219.0 650.0,220.2 651.7,221.5 653.2,222.9 654.7,224.3 656.2,225.8 657.8,227.3 659.4,228.8 661.4,230.4 663.4,232.1 665.5,233.8 667.6,235.4 669.8,236.8 671.9,238.1 673.7,239.1 675.5,240.0 677.4,240.9 679.2,241.5 681.0,241.9 682.8,242.0 684.6,241.6 686.4,240.7 688.1,239.6 689.9,238.4 691.8,237.4 693.7,236.6 696.3,236.1 699.2,235.9 702.2,235.8 705.1,235.8 707.8,235.8 710.0,235.8 711.0,235.7 711.8,235.7 712.5,235.6 713.2,235.5 714.0,235.5 715.0,235.5 717.0,235.6 719.4,235.8 722.0,236.0 724.7,236.3 727.4,236.5 730.0,236.8 732.5,237.0 735.0,237.4 737.5,237.8 740.0,238.1 742.5,238.2 745.0,238.0 747.5,237.3 750.0,236.3 752.5,235.0 755.0,233.6 757.5,232.5 760.0,231.8 762.5,231.4 765.1,231.2 767.7,231.2 770.2,231.3 772.7,231.5 775.0,231.8 776.8,232.0 778.4,232.3 780.1,232.6 781.6,233.1 783.3,233.6 785.0,234.2 787.4,235.4 790.0,236.8 792.6,238.4 795.2,240.1 797.7,241.6 800.0,243.0 801.7,243.9 803.3,244.8 804.8,245.6 806.3,246.4 807.8,247.1 809.4,247.8 810.9,248.4 812.4,249.0 813.9,249.6 815.4,250.1 817.0,250.6 818.8,251.0 821.1,251.5 823.7,251.8 826.4,252.1 829.2,252.4 831.8,252.5 834.4,252.5 836.6,252.5 838.9,252.3 841.2,252.2 843.3,251.9 845.2,251.5 846.9,251.0 847.8,250.5 848.6,250.0 849.3,249.4 850.0,248.8 850.7,248.2 851.6,247.8 852.8,247.5 854.1,247.2 855.4,247.1 856.8,247.0 858.4,247.0 860.0,247.0 862.7,246.9 865.8,246.8 869.1,246.8 872.4,247.0 875.5,247.4 878.4,248.1 880.7,249.2 882.7,250.6 884.6,252.3 886.5,253.9 888.5,255.4 890.7,256.5 893.0,257.2 895.4,257.6 897.8,257.7 900.4,257.8 903.1,257.9 906.0,258.0 910.7,258.2 916.2,258.4 921.9,258.5 927.6,258.6 932.6,258.7 936.6,258.8 938.1,258.9 939.5,258.9 940.7,259.0 941.8,259.1 942.9,259.1 944.0,259.2 944.9,259.3 945.7,259.4 946.6,259.5 947.4,259.6 948.2,259.6 949.0,259.4 950.1,259.0 951.1,258.4 952.2,257.6 953.3,256.8 954.4,255.8 955.4,254.9 956.5,253.8 957.6,252.6 958.7,251.3 959.7,249.9 960.7,248.6 961.7,247.3 962.7,246.0 963.8,244.4 964.9,242.9 965.9,241.6 966.5,240.7 966.8,240.3" stroke="#ecd070"/>
<polyline points="13.2,147.9 13.7,147.8 15.0,147.4 16.8,146.9 18.9,146.2 21.0,145.5 22.9,144.7 25.0,143.7 27.1,142.7 29.3,141.6 31.5,140.3 33.7,138.8 35.8,137.1 38.5,134.2 41.1,130.6 43.7,126.6 46.4,122.7 49.1,119.3 51.9,116.7 54.1,115.5 56.4,114.7 58.7,114.1 61.0,113.7 63.4,113.2 65.9,112.4 69.1,111.1 72.5,109.4 76.1,107.7 79.5,106.1 82.6,104.7 85.3,103.8 86.5,103.5 87.6,103.3 88.6,103.2 89.6,103.2 90.6,103.3 91.7,103.4 93.0,103.8 94.4,104.4 95.8,105.2 97.2,105.9 98.7,106.6 100.3,107.0 102.6,107.3 105.3,107.5 108.1,107.5 110.8,107.3 113.3,106.8 115.4,106.0 116.7,105.1 117.9,103.9 118.8,102.5 119.7,101.1 120.7,99.7 121.8,98.4 123.1,97.2 124.3,96.1 125.7,95.0 127.1,93.9 128.7,92.9 130.4,92.0 133.1,90.9 136.2,89.8 139.5,89.0 143.0,88.2 146.5,87.5 150.0,87.0 153.9,86.5 158.1,86.2 162.4,86.0 166.5,86.0 170.3,86.1 173.4,86.4 174.8,86.7 176.0,87.1 177.1,87.6 178.2,88.1 179.3,88.5 180.5,88.8 182.1,89.0 183.9,89.0 185.7,89.0 187.6,89.0 189.3,89.1 191.0,89.4 192.5,90.0 193.8,90.9 195.1,91.9 196.4,92.9 197.8,93.6 199.2,94.1 200.7,94.1 202.2,93.9 203.8,93.4 205.3,92.9 207.0,92.5 208.6,92.3 210.5,92.3 212.5,92.5 214.6,92.7 216.6,93.1 218.5,93.5 220.3,94.1 221.6,94.7 222.8,95.5 223.9,96.3 225.0,97.2 226.1,98.0 227.4,98.8 229.2,99.7 231.0,100.7 233.0,101.7 235.0,102.6 237.1,103.4 239.1,104.0 241.1,104.4 243.1,104.6 245.1,104.8 247.1,104.8 249.0,105.0 250.8,105.2 252.1,105.4 253.4,105.6 254.6,105.9 255.8,106.1 256.9,106.5 257.9,107.0 258.8,107.6 259.5,108.4 260.2,109.3 260.9,110.1 261.6,111.0 262.5,111.7 263.6,112.4 264.8,113.1 266.0,113.7 267.3,114.3 268.6,114.8 270.0,115.2 271.5,115.5 273.1,115.6 274.8,115.7 276.5,115.7 278.2,115.7 280.0,115.9 282.2,116.3 284.4,116.7 286.7,117.2 289.1,117.8 291.5,118.3 294.0,118.7 297.1,119.1 300.3,119.5 303.7,119.8 307.0,120.1 310.1,120.4 312.8,120.6 314.4,120.6 315.8,120.6 317.1,120.5 318.4,120.5 319.7,120.6 321.0,121.1 323.1,122.5 325.1,124.7 327.2,127.2 329.3,129.9 331.6,132.2 333.9,134.0 336.1,135.1 338.4,136.0 340.8,136.8 343.3,137.3 345.6,137.5 347.9,137.5 349.9,137.1 351.8,136.4 353.7,135.4 355.6,134.3 357.6,133.4 359.6,132.8 361.9,132.4 364.4,132.2 366.8,132.1 369.3,132.1 371.6,132.2 373.7,132.3 375.0,132.3 376.2,132.4 377.3,132.4 378.4,132.6 379.5,132.9 380.7,133.3 382.9,134.6 385.4,136.5 387.9,138.8 390.4,141.1 392.8,143.1 394.8,144.5 395.7,145.0 396.5,145.2 397.3,145.4 398.1,145.6 398.9,145.9 400.0,146.2 403.2,147.7 407.2,149.7 411.7,151.9 416.5,154.1 421.0,156.0 425.0,157.2 427.6,157.4 430.0,157.2 432.4,156.9 434.7,156.6 436.9,156.6 439.0,157.2 441.3,159.0 443.4,161.8 445.4,165.0 447.4,168.2 449.4,171.0 451.6,172.8 453.3,173.4 455.2,173.5 457.0,173.4 458.9,173.3 460.7,173.3 462.5,173.6 464.4,174.4 466.2,175.6 468.0,176.9 469.7,178.3 471.5,179.6 473.4,180.6 475.2,181.3 477.0,181.9 478.8,182.3 480.7,182.7 482.5,183.2 484.4,183.8 486.4,184.5 488.5,185.3 490.6,186.1 492.7,186.9 494.8,187.7 496.9,188.4 499.0,189.0 501.0,189.6 503.1,190.1 505.2,190.6 507.3,191.1 509.4,191.6 511.5,192.1 513.5,192.6 515.6,193.1 517.6,193.5 519.7,193.8 521.9,193.9 524.4,193.8 527.0,193.6 529.7,193.2 532.4,192.7 535.0,192.2 537.5,191.6 539.7,190.9 541.8,190.1 543.8,189.2 545.8,188.4 547.9,187.7 550.0,187.3 552.3,187.2 554.5,187.5 556.8,187.9 559.2,188.4 561.6,188.7 564.0,188.9 566.8,188.9 569.7,188.8 572.6,188.6 575.5,188.3 578.4,187.9 581.2,187.3 583.9,186.5 586.5,185.5 589.0,184.3 591.6,183.1 594.2,182.0 596.9,181.1 599.9,180.3 603.0,179.7 606.2,179.1 609.4,178.7 612.5,178.3 615.6,178.0 618.3,177.9 621.0,177.9 623.6,178.1 626.2,178.2 628.8,178.2 631.2,178.0 633.4,177.6 635.5,177.1 637.5,176.5 639.5,175.8 641.6,175.3 643.8,174.8 646.3,174.4 649.1,174.0 651.9,173.7 654.6,173.5 657.2,173.3 659.4,173.3 660.6,173.3 661.6,173.3 662.6,173.4 663.6,173.5 664.5,173.7 665.6,174.0 667.1,174.5 668.7,175.1 670.3,175.9 671.9,176.8 673.5,177.7 675.0,178.8 676.7,180.1 678.3,181.5 679.9,183.1 681.5,184.8 683.0,186.4 684.4,188.1 685.6,189.7 686.7,191.3 687.7,192.9 688.6,194.5 689.6,196.1 690.6,197.5 691.4,198.6 692.1,199.6 692.8,200.6 693.6,201.5 694.4,202.3 695.3,203.0 696.4,203.6 697.7,204.1 699.0,204.5 700.4,204.8 701.8,205.0 703.1,205.3 704.2,205.5 705.3,205.7 706.3,205.8 707.4,205.9 708.6,206.0 710.0,206.1 712.8,206.2 716.0,206.2 719.5,206.1 723.2,206.0 726.7,205.8 730.0,205.5 732.6,205.2 735.1,204.7 737.5,204.2 739.9,203.7 742.4,203.2 745.0,203.0 748.2,203.0 751.4,203.1 754.8,203.3 758.2,203.7 761.6,204.0 765.0,204.2 768.4,204.4 771.9,204.6 775.4,204.7 778.9,204.9 782.1,205.1 785.0,205.5 786.9,205.9 788.5,206.4 790.1,206.9 791.6,207.4 793.3,207.8 795.0,208.0 797.4,207.9 799.9,207.6 802.5,207.0 805.1,206.5 807.6,206.1 810.0,206.0 811.8,206.1 813.5,206.3 815.2,206.6 816.8,207.0 818.4,207.5 820.0,208.0 821.7,208.7 823.4,209.5 825.0,210.5 826.7,211.4 828.3,212.3 830.0,213.0 831.7,213.5 833.4,213.9 835.1,214.1 836.8,214.5 838.5,214.9 840.0,215.5 841.4,216.4 842.6,217.4 843.8,218.6 845.0,219.8 846.2,220.9 847.5,221.8 848.7,222.4 849.8,222.9 850.9,223.3 852.1,223.7 853.5,224.0 855.0,224.2 858.4,224.5 862.6,224.4 867.2,224.2 871.9,223.8 876.3,223.4 880.0,223.0 882.0,222.8 883.9,222.5 885.6,222.2 887.2,221.9 888.9,221.6 890.7,221.3 892.7,221.1 894.8,220.9 896.9,220.7 899.0,220.4 901.0,220.1 902.9,219.7 904.5,219.2 906.0,218.5 907.5,217.7 909.0,217.0 910.5,216.4 912.1,215.9 914.0,215.7 916.0,215.8 918.1,216.0 920.2,216.2 922.3,216.2 924.4,215.9 926.9,215.1 929.5,213.9 932.1,212.5 934.7,211.0 937.2,209.5 939.7,208.2 941.9,207.1 944.1,206.0 946.2,205.0 948.3,204.0 950.2,203.0 952.0,202.1 953.1,201.4 954.1,200.7 955.1,200.1 956.1,199.5 957.0,199.1 958.1,199.0 959.7,199.4 961.7,200.4 963.7,201.7 965.5,203.0 966.8,204.0 967.3,204.4" stroke="#ecd070"/>
<polyline points="13.2,162.3 13.7,162.3 15.0,162.1 16.8,161.9 18.9,161.6 21.0,161.2 22.9,160.8 24.9,160.1 27.0,159.4 29.2,158.5 31.3,157.5 33.5,156.4 35.8,155.4 38.5,154.1 41.4,152.7 44.3,151.3 47.2,149.8 50.1,148.3 53.0,146.8 55.9,145.4 58.8,144.0 61.7,142.5 64.6,141.1 67.4,139.7 70.2,138.2 72.8,136.8 75.4,135.3 78.0,133.9 80.5,132.4 83.0,131.0 85.3,129.6 87.2,128.4 88.9,127.2 90.5,126.0 92.2,124.9 94.0,124.0 96.0,123.2 98.6,122.7 101.5,122.4 104.6,122.4 107.6,122.4 110.5,122.4 113.2,122.1 115.1,121.7 117.0,121.3 118.7,120.8 120.4,120.2 122.2,119.6 124.0,118.9 126.4,117.8 128.9,116.4 131.5,114.9 134.0,113.5 136.6,112.2 139.0,111.3 140.9,110.8 142.7,110.5 144.5,110.3 146.3,110.1 148.2,110.0 150.0,109.9 151.9,109.8 153.9,109.6 155.8,109.5 157.8,109.5 159.7,109.4 161.7,109.3 163.7,109.2 165.7,109.1 167.7,109.1 169.7,109.0 171.6,108.9 173.4,108.7 174.7,108.5 175.9,108.3 177.0,108.1 178.1,107.9 179.3,107.7 180.5,107.6 182.0,107.5 183.5,107.5 185.0,107.4 186.6,107.5 188.2,107.5 189.9,107.6 191.9,107.7 194.1,107.9 196.3,108.0 198.5,108.3 200.7,108.7 202.8,109.3 205.0,110.2 207.1,111.3 209.1,112.5 211.2,113.8 213.4,115.1 215.6,116.3 218.2,117.5 221.0,118.8 223.9,120.0 226.7,121.2 229.5,122.3 232.1,123.4 234.2,124.3 236.1,125.2 238.0,126.0 239.9,126.8 241.8,127.5 243.8,128.1 245.7,128.5 247.7,128.6 249.7,128.7 251.7,128.8 253.6,128.9 255.5,129.2 257.1,129.6 258.7,130.0 260.2,130.5 261.7,131.0 263.2,131.6 264.7,132.3 266.3,133.2 267.8,134.3 269.3,135.5 270.9,136.6 272.4,137.7 274.0,138.6 275.5,139.3 277.0,139.8 278.6,140.3 280.2,140.8 281.8,141.2 283.4,141.7 285.3,142.2 287.2,142.8 289.2,143.3 291.2,143.9 293.2,144.3 295.2,144.8 297.1,145.2 299.1,145.6 301.0,146.0 302.9,146.3 304.9,146.6 306.9,146.8 309.2,146.8 311.6,146.6 314.0,146.4 316.4,146.2 318.7,146.1 320.9,146.4 322.6,146.9 324.2,147.7 325.7,148.6 327.2,149.5 328.7,150.4 330.3,151.1 331.9,151.6 333.4,152.1 334.9,152.5 336.5,152.8 338.2,153.1 340.0,153.4 342.6,153.6 345.4,153.7 348.4,153.7 351.4,153.7 354.4,153.7 357.3,153.9 360.1,154.2 363.0,154.4 365.8,154.8 368.6,155.2 371.3,155.7 373.7,156.2 375.4,156.7 376.9,157.2 378.4,157.7 379.8,158.3 381.3,159.0 383.0,159.7 385.5,160.9 388.2,162.2 391.0,163.6 394.0,165.1 397.0,166.7 400.0,168.1 403.5,169.7 407.1,171.3 410.7,172.9 414.5,174.5 418.2,176.0 421.9,177.5 425.6,178.9 429.3,180.2 433.1,181.4 436.8,182.7 440.3,183.9 443.8,185.3 446.5,186.6 449.2,187.9 451.8,189.2 454.3,190.6 456.8,191.9 459.4,193.1 462.0,194.3 464.6,195.4 467.3,196.5 469.9,197.6 472.5,198.5 475.0,199.4 477.2,200.1 479.3,200.6 481.4,201.1 483.5,201.6 485.5,202.0 487.5,202.5 489.1,202.9 490.7,203.3 492.2,203.8 493.7,204.2 495.3,204.5 496.9,204.8 498.9,205.1 500.9,205.3 502.9,205.4 505.1,205.5 507.2,205.6 509.4,205.6 511.9,205.6 514.3,205.5 516.9,205.3 519.5,205.2 522.2,205.0 525.0,204.8 528.9,204.6 533.0,204.3 537.4,204.0 541.7,203.6 546.0,203.3 550.0,203.0 553.3,202.8 556.5,202.5 559.5,202.3 562.6,202.0 565.7,201.8 568.8,201.4 571.8,201.0 574.9,200.5 578.0,200.0 581.1,199.4 584.2,198.8 587.5,198.3 591.5,197.6 595.7,196.8 600.0,196.0 604.3,195.3 608.5,194.8 612.5,194.4 615.8,194.3 619.1,194.3 622.3,194.5 625.4,194.7 628.4,195.0 631.2,195.2 633.5,195.4 635.6,195.5 637.6,195.7 639.6,195.9 641.6,196.3 643.8,196.7 646.3,197.4 648.9,198.2 651.5,199.1 654.2,200.1 656.8,201.1 659.4,202.2 662.0,203.4 664.6,204.6 667.2,205.9 669.8,207.2 672.4,208.6 675.0,210.0 677.6,211.6 680.1,213.3 682.6,215.1 685.2,216.8 687.8,218.3 690.6,219.4 693.8,220.2 697.3,220.7 700.9,220.9 704.3,221.0 707.5,221.0 710.0,221.0 711.0,221.0 711.7,220.9 712.4,220.8 713.1,220.7 713.9,220.6 715.0,220.5 719.6,220.2 725.8,219.9 733.2,219.7 740.9,219.4 748.4,219.3 755.0,219.2 759.5,219.3 763.9,219.4 768.1,219.5 772.1,219.7 776.1,220.0 780.0,220.5 783.5,221.1 786.8,221.9 790.0,222.8 793.3,223.7 796.6,224.7 800.0,225.5 804.0,226.4 808.1,227.3 812.3,228.1 816.6,228.9 820.8,229.7 825.0,230.5 829.2,231.2 833.3,232.0 837.5,232.7 841.7,233.3 845.8,233.9 850.0,234.2 854.2,234.4 858.6,234.3 862.9,234.1 867.1,233.9 871.2,233.9 875.0,234.2 877.8,234.8 880.5,235.6 883.1,236.5 885.6,237.4 888.1,238.1 890.7,238.6 893.2,238.8 895.8,238.8 898.3,238.7 900.9,238.5 903.5,238.3 906.0,238.1 908.6,237.9 911.3,237.6 914.0,237.2 916.6,236.9 919.1,236.7 921.3,236.6 922.7,236.7 924.0,236.9 925.3,237.1 926.5,237.3 927.7,237.5 929.0,237.4 930.7,237.1 932.4,236.6 934.2,235.9 936.0,235.1 937.9,234.3 939.7,233.5 941.7,232.6 943.7,231.6 945.7,230.5 947.8,229.4 949.8,228.4 952.0,227.4 954.8,226.3 958.1,225.1 961.4,223.9 964.4,223.0 966.5,222.3 967.3,222.0" stroke="#50d050"/>
<polyline points="13.2,156.5 13.7,156.4 14.9,156.0 16.7,155.5 18.8,154.8 21.0,154.1 22.9,153.3 25.3,152.2 27.8,150.9 30.3,149.5 32.9,148.0 35.5,146.3 38.0,144.7 40.5,142.8 43.1,140.7 45.5,138.6 48.0,136.4 50.5,134.5 53.0,132.8 55.1,131.6 57.3,130.7 59.4,129.8 61.6,129.0 63.7,128.3 65.9,127.5 68.1,126.7 70.2,126.0 72.4,125.2 74.6,124.5 76.7,123.9 78.8,123.2 80.7,122.6 82.5,122.0 84.3,121.4 86.0,120.9 87.8,120.4 89.6,119.9 91.4,119.5 93.1,119.0 94.9,118.6 96.6,118.2 98.5,118.0 100.3,117.8 102.4,117.8 104.6,118.1 106.9,118.5 109.1,118.8 111.2,119.0 113.2,118.9 114.7,118.6 116.2,118.2 117.5,117.6 118.9,117.0 120.3,116.3 121.8,115.6 123.8,114.5 125.9,113.3 128.1,112.0 130.3,110.6 132.5,109.3 134.7,108.1 137.0,107.1 139.4,106.2 141.8,105.3 144.1,104.4 146.1,103.6 147.6,102.7 148.1,102.2 148.5,101.7 148.8,101.1 149.1,100.6 149.5,100.2 150.0,99.9 150.9,99.7 152.0,99.6 153.2,99.7 154.5,99.9 155.8,100.2 157.0,100.5 158.4,101.1 159.7,101.8 161.1,102.7 162.4,103.6 163.8,104.5 165.2,105.2 166.6,105.7 167.9,106.1 169.3,106.4 170.7,106.8 172.1,107.2 173.4,107.6 174.6,108.1 175.9,108.7 177.1,109.3 178.3,109.9 179.4,110.5 180.5,111.1 181.3,111.5 182.1,111.9 182.9,112.3 183.7,112.7 184.4,113.1 185.2,113.4 185.9,113.7 186.7,113.9 187.4,114.1 188.2,114.3 189.0,114.4 189.9,114.6 191.6,114.8 193.7,114.8 195.9,114.8 198.0,114.8 200.0,114.9 201.6,115.2 202.3,115.4 202.9,115.7 203.4,116.1 203.9,116.4 204.5,116.7 205.1,117.0 206.1,117.3 207.2,117.6 208.3,117.9 209.5,118.2 210.6,118.5 211.6,118.8 212.3,119.1 213.0,119.4 213.6,119.8 214.2,120.1 214.9,120.6 215.6,121.0 217.0,121.8 218.5,122.8 220.1,123.9 221.8,125.0 223.4,126.1 225.0,127.0 226.2,127.6 227.5,128.2 228.7,128.7 229.8,129.2 231.0,129.8 232.1,130.4 233.1,131.1 234.1,132.0 235.1,132.9 236.0,133.7 237.0,134.5 238.0,135.2 238.9,135.7 239.9,136.2 240.8,136.6 241.8,137.0 242.8,137.2 243.8,137.4 244.9,137.4 246.1,137.4 247.4,137.2 248.6,136.9 249.7,136.6 250.8,136.3 251.7,135.9 252.5,135.5 253.2,135.0 254.0,134.5 254.7,134.1 255.5,133.9 256.2,133.8 257.0,133.8 257.7,133.9 258.4,134.0 259.2,134.2 260.0,134.3 261.0,134.5 262.0,134.7 263.1,134.9 264.2,135.2 265.2,135.5 266.2,135.9 267.3,136.4 268.3,136.9 269.4,137.5 270.4,138.1 271.4,138.8 272.5,139.4 273.6,140.1 274.8,140.8 276.0,141.5 277.2,142.2 278.3,143.0 279.5,143.7 280.7,144.5 281.9,145.2 283.0,146.0 284.2,146.8 285.4,147.6 286.6,148.4 287.9,149.4 289.2,150.4 290.5,151.5 291.8,152.5 293.1,153.4 294.4,154.2 295.4,154.7 296.4,155.1 297.5,155.5 298.5,155.8 299.5,156.0 300.6,156.2 301.9,156.4 303.2,156.6 304.5,156.7 305.9,156.7 307.2,156.5 308.4,156.2 309.5,155.6 310.6,154.7 311.6,153.6 312.6,152.5 313.6,151.5 314.7,150.7 315.7,150.1 316.7,149.5 317.7,149.0 318.8,148.6 319.8,148.2 320.9,148.0 321.9,147.9 322.9,148.0 323.9,148.2 324.9,148.4 326.0,148.6 327.2,148.8 329.1,148.8 331.2,148.7 333.5,148.6 335.7,148.5 338.0,148.7 340.0,149.1 341.8,149.8 343.5,150.8 345.2,151.9 346.8,153.1 348.4,154.3 350.0,155.5 351.7,156.7 353.3,158.1 355.0,159.4 356.6,160.7 358.3,161.9 360.0,163.0 361.6,163.8 363.2,164.4 364.8,164.9 366.5,165.5 368.2,166.0 370.0,166.8 372.3,167.9 374.8,169.3 377.3,170.8 379.8,172.3 382.4,173.5 385.0,174.2 387.5,174.5 390.2,174.4 392.9,174.1 395.5,173.7 397.9,173.5 400.0,173.6 401.2,173.8 402.2,174.1 403.2,174.4 404.1,174.8 405.1,175.3 406.3,175.9 408.3,177.1 410.6,178.7 413.0,180.5 415.5,182.4 417.9,184.0 420.3,185.3 422.1,186.0 423.9,186.6 425.7,187.1 427.5,187.5 429.3,187.9 431.2,188.4 433.7,189.1 436.4,189.9 439.2,190.7 441.9,191.5 444.5,192.3 446.9,193.1 448.6,193.6 450.1,194.1 451.6,194.6 453.1,195.1 454.6,195.6 456.2,196.2 458.7,197.2 461.2,198.2 463.9,199.3 466.7,200.4 469.3,201.5 471.9,202.5 474.1,203.3 476.2,204.2 478.3,205.0 480.4,205.8 482.4,206.5 484.4,207.2 486.1,207.9 487.7,208.6 489.3,209.3 490.8,209.8 492.3,210.2 493.8,210.3 494.8,210.1 495.8,209.6 496.8,209.0 497.8,208.3 498.8,207.7 500.0,207.2 501.8,206.8 503.8,206.5 506.0,206.3 508.2,206.1 510.4,205.9 512.5,205.6 514.6,205.2 516.7,204.6 518.8,204.1 520.8,203.5 522.9,203.0 525.0,202.5 527.1,202.0 529.2,201.6 531.2,201.2 533.3,200.8 535.4,200.5 537.5,200.2 539.6,200.0 541.7,199.8 543.9,199.7 546.0,199.6 548.0,199.7 550.0,199.8 551.6,200.1 553.1,200.5 554.5,201.0 556.0,201.5 557.6,202.0 559.4,202.2 562.6,202.3 566.3,202.1 570.3,201.8 574.2,201.3 578.0,200.6 581.2,199.8 583.3,199.1 585.3,198.2 587.0,197.2 588.8,196.2 590.5,195.2 592.2,194.4 593.8,193.8 595.3,193.2 596.9,192.7 598.4,192.2 600.0,191.7 601.6,191.2 603.4,190.7 605.2,190.0 607.0,189.4 608.9,188.8 610.7,188.4 612.5,188.1 614.1,188.0 615.7,188.0 617.3,188.1 618.8,188.2 620.4,188.5 621.9,188.9 623.5,189.4 625.1,190.1 626.6,190.9 628.2,191.8 629.7,192.7 631.2,193.6 632.8,194.5 634.4,195.5 636.0,196.6 637.5,197.6 639.1,198.7 640.6,199.8 642.2,200.9 643.7,202.1 645.2,203.3 646.7,204.5 648.3,205.7 650.0,206.9 652.0,208.2 654.0,209.5 656.1,210.8 658.3,212.1 660.4,213.4 662.5,214.7 664.6,216.0 666.7,217.4 668.8,218.8 670.9,220.2 673.0,221.4 675.0,222.5 676.6,223.3 678.3,224.2 679.9,224.9 681.4,225.6 682.9,226.1 684.4,226.4 685.5,226.5 686.5,226.4 687.5,226.3 688.5,226.1 689.5,225.9 690.6,225.6 692.1,225.2 693.6,224.7 695.2,224.1 696.8,223.6 698.4,223.0 700.0,222.5 701.6,222.1 703.2,221.7 704.9,221.4 706.5,221.1 708.2,220.7 710.0,220.2 712.3,219.3 714.8,218.1 717.3,216.7 719.9,215.5 722.5,214.6 725.0,214.2 727.5,214.5 730.0,215.3 732.5,216.5 735.0,217.7 737.5,218.7 740.0,219.2 742.5,219.4 744.9,219.2 747.3,218.9 749.8,218.5 752.4,218.2 755.0,218.0 758.3,218.0 761.7,218.0 765.3,218.2 768.8,218.4 772.1,218.7 775.0,219.2 776.9,219.7 778.5,220.3 780.1,221.0 781.7,221.6 783.3,222.3 785.0,223.0 787.4,223.7 789.9,224.4 792.6,225.1 795.2,225.9 797.7,226.8 800.0,228.0 801.9,229.5 803.7,231.2 805.4,233.1 807.0,235.0 808.5,236.7 810.0,238.0 810.9,238.6 811.6,239.2 812.4,239.6 813.1,240.0 814.0,240.3 815.0,240.5 817.0,240.6 819.4,240.3 822.0,239.8 824.7,239.2 827.4,238.6 830.0,238.0 832.5,237.4 835.1,236.8 837.7,236.2 840.2,235.5 842.7,234.8 845.0,234.2 846.8,233.8 848.4,233.3 850.0,232.8 851.6,232.3 853.2,232.0 855.0,231.8 857.4,231.6 859.9,231.6 862.5,231.8 865.2,232.0 867.7,232.5 870.0,233.0 871.8,233.6 873.5,234.3 875.1,235.2 876.7,236.1 878.3,237.0 880.0,238.0 882.1,239.2 884.3,240.7 886.5,242.2 888.7,243.6 890.7,244.7 892.5,245.5 893.3,245.7 894.0,245.9 894.7,245.9 895.3,245.9 896.0,245.9 896.8,245.8 898.1,245.6 899.6,245.4 901.1,245.0 902.7,244.5 904.4,244.0 906.0,243.5 908.0,242.8 910.1,242.0 912.2,241.1 914.3,240.2 916.3,239.2 918.2,238.1 919.8,237.1 921.4,235.9 922.8,234.8 924.3,233.6 925.8,232.4 927.4,231.2 929.3,229.9 931.3,228.5 933.4,227.1 935.5,225.8 937.6,224.6 939.7,223.6 941.7,222.9 943.8,222.3 945.9,221.9 948.0,221.5 950.1,221.1 952.0,220.5 953.6,219.8 955.2,219.0 956.7,218.1 958.2,217.3 959.7,216.6 961.1,216.2 962.3,216.1 963.7,216.2 965.0,216.3 966.2,216.5 967.0,216.6 967.3,216.7" stroke="#f0d878"/>
</g>
<g fill="none" stroke-width="1" shape-rendering="crispEdges">
<line x1="10" y1="291.5" x2="967" y2="291.5" stroke="#c82838" stroke-dasharray="6,1,3,1"/>
<line x1="10" y1="346.5" x2="967" y2="346.5" stroke="#c82838" stroke-dasharray="6,1,3,1"/>
</g>
<g fill="none" stroke-width="1" shape-rendering="crispEdges">
<polyline points="13.5,321.6 21.7,307.0 27.6,293.3 35.4,288.4 43.2,288.4 49.1,283.5 54.9,295.3 62.7,314.8 68.6,338.2 76.4,316.7 87.1,288.4 94.0,307.0 101.8,338.2 108.6,355.8 115.5,330.4 127.2,283.5 137.0,305.0 146.7,326.5 154.5,315.8 158.4,322.6 166.3,323.6 172.1,346.0 178.0,344.1 183.8,341.1 193.6,318.7 200.0,300.1 207.8,328.5 219.5,354.8 227.3,346.0 239.1,333.3 246.9,337.2 254.7,310.9 262.5,306.0 270.3,330.4 277.1,352.9 282.0,348.0 289.8,326.5 299.6,294.3 307.4,304.0 319.1,303.0 328.9,322.6 336.7,340.2 344.5,330.4 364.1,350.0 375.8,310.9 383.6,308.9 391.4,336.3 395.9,340.2 401.7,331.4 409.5,330.4 418.3,339.2 426.1,328.5 433.0,330.4 436.9,326.5 442.7,329.4 448.6,317.7 465.2,345.1 480.8,312.8 495.5,328.5 510.1,302.1 517.9,321.6 526.7,313.8 536.5,310.9 540.4,318.7 548.2,313.8 559.9,331.4 565.8,331.4 583.4,296.2 591.7,301.1 601.5,306.0 609.3,300.1 617.1,312.8 626.9,346.0 636.6,357.8 642.5,349.9 650.3,344.1 658.1,346.0 667.9,342.1 672.8,339.2 679.6,340.2 689.4,320.6 701.1,288.4 707.0,296.2 712.8,311.9 720.6,320.6 730.4,333.3 736.3,350.0 755.8,303.0 763.6,314.8 770.0,330.7 776.2,324.5 784.4,329.6 790.5,336.8 795.6,354.2 800.8,349.1 807.9,348.1 813.1,345.0 821.3,325.5 829.5,301.9 835.6,306.0 840.8,300.9 845.9,309.1 852.0,299.9 860.2,325.5 869.5,345.0 876.6,340.9 882.8,341.9 893.1,354.2 901.3,325.5 913.6,283.5 919.7,290.7 927.9,321.4 934.1,327.6 940.2,310.1 948.4,300.9 954.6,297.8 959.7,299.9 966.9,318.3" stroke="#cc80e0"/>
<polyline points="13.5,273.8 17.8,308.9 23.7,286.5 27.6,293.3 31.5,285.5 37.3,289.4 45.2,277.7 51.0,285.5 54.9,344.1 57.9,325.5 62.7,344.1 65.7,347.0 70.5,303.0 78.4,281.6 84.2,285.5 92.0,346.0 95.0,360.7 99.8,351.9 107.7,360.7 112.5,282.6 120.3,274.7 127.2,293.3 135.0,330.4 138.9,308.9 142.8,346.0 150.6,295.3 153.6,292.3 157.5,350.0 162.3,342.1 170.2,350.0 176.0,342.1 179.9,352.9 185.8,291.3 190.7,279.6 193.6,318.7 197.5,292.3 201.4,314.8 205.9,357.8 212.7,362.6 216.6,342.1 219.5,349.9 223.4,324.5 229.3,338.2 234.2,346.0 238.1,323.6 243.9,346.0 245.9,352.9 248.8,280.6 252.7,300.1 256.6,288.4 262.5,316.7 268.4,357.8 272.3,348.0 275.2,360.7 285.9,278.6 289.8,300.1 293.8,289.4 300.6,315.8 308.4,312.8 311.3,279.6 317.2,299.2 327.0,355.8 330.9,334.3 336.7,338.2 341.6,318.7 348.4,342.1 355.3,362.6 360.2,342.1 364.1,341.1 370.9,275.7 374.8,281.6 379.7,320.6 381.6,344.1 385.5,335.3 388.5,351.9 393.4,340.2 399.8,305.0 403.7,330.4 410.5,351.9 414.4,336.3 422.2,308.9 426.1,318.7 430.0,359.7 436.9,302.1 440.8,324.5 446.6,299.2 455.4,356.8 458.4,345.1 463.2,352.9 476.9,288.4 488.6,350.0 499.4,280.6 503.3,288.4 507.2,314.8 517.0,352.9 521.8,280.6 525.7,290.4 535.5,339.2 543.3,274.7 546.3,289.4 554.1,359.7 565.8,295.3 569.7,314.8 573.6,295.3 580.4,288.4 582.9,291.3 587.8,317.7 594.6,294.3 598.6,313.8 602.5,296.2 605.4,299.2 609.3,293.3 612.2,326.5 614.2,346.0 617.1,330.4 621.0,357.8 624.9,359.7 632.7,357.8 638.6,353.8 642.5,328.5 647.4,351.9 650.3,331.4 653.2,357.8 662.0,339.2 668.9,329.4 672.8,334.3 675.7,354.8 679.6,355.8 687.4,286.5 694.3,275.7 698.2,281.6 701.1,309.9 707.0,315.8 712.8,341.1 716.7,275.7 718.7,303.0 722.6,344.1 727.5,352.9 737.2,354.8 742.1,301.1 749.9,293.3 753.8,301.1 757.7,324.5 766.5,350.0 775.1,288.6 777.2,300.9 782.3,362.4 790.5,353.2 800.8,335.8 807.9,356.3 815.1,315.3 822.3,301.9 826.4,278.4 834.6,339.9 837.7,290.7 840.8,287.6 844.9,317.3 847.9,299.9 852.0,295.8 857.2,355.3 864.3,356.3 870.5,315.3 876.6,346.0 878.7,357.3 889.0,360.4 897.2,294.8 901.3,279.4 910.5,282.5 913.6,288.6 921.8,325.5 926.9,357.3 930.0,309.1 934.1,312.2 937.1,291.7 945.4,305.0 949.5,294.8 955.6,293.7 958.7,299.9 962.8,362.4 966.9,335.8" stroke="#60d840"/>
</g>
<g fill="none" stroke-width="1" shape-rendering="crispEdges">
<line x1="10" y1="398.5" x2="967" y2="398.5" stroke="#f4f4f4" stroke-dasharray="6,1,3,1,3,1,3,1"/>
<line x1="10" y1="440.5" x2="967" y2="440.5" stroke="#f4f4f4" stroke-dasharray="6,1,3,1,3,1,3,1"/>
</g>
<polyline points="13.1,407.1 17.5,411.4 22.5,408.6 27.2,405.5 33.4,399.2 39.7,398.2 44.4,395.5 50.3,393.5 54.5,407.1 57.7,404.4 66.2,411.4 72.5,404.9 78.8,401.8 83.4,397.7 89.7,403.6 94.4,411.1 98.3,411.4 103.8,418.0 109.2,420.8 113.1,411.4 117.8,405.2 121.7,398.9 124.8,399.2 130.3,408.0 135.0,408.3 138.9,403.9 142.8,411.4 147.5,409.1 152.2,406.4 157.7,416.9 163.9,416.1 170.0,421.1 173.9,421.6 180.2,425.2 185.6,419.2 190.3,413.3 193.4,420.0 197.3,415.3 201.2,417.4 205.2,428.6 208.3,429.9 212.2,433.6 216.6,427.4 220.0,430.5 223.9,427.4 227.8,428.9 234.1,430.2 238.0,428.3 241.9,430.2 245.3,433.6 248.9,418.0 252.0,417.4 256.7,415.3 260.6,421.6 265.3,428.9 268.4,432.5 271.6,433.6 274.7,439.6 279.4,434.6 285.6,425.5 289.5,427.1 295.0,424.7 301.2,426.3 308.3,425.2 311.4,415.3 315.3,411.4 320.0,418.5 326.2,428.6 330.0,423.2 337.8,425.8 341.7,424.2 345.6,425.2 351.9,427.8 355.8,433.6 359.7,436.4 363.6,433.6 367.5,434.1 370.6,420.0 374.5,416.1 381.6,427.1 388.6,433.6 392.5,431.8 397.2,426.3 401.1,426.3 405.0,430.2 411.2,434.1 417.5,429.4 423.8,429.4 428.4,433.3 433.1,437.7 436.2,426.3 440.9,430.2 444.1,430.2 447.2,426.3 455.0,436.4 458.1,434.6 461.2,435.2 467.5,431.0 473.0,430.2 477.7,424.2 483.9,428.3 487.8,434.9 490.0,434.1 494.7,427.1 499.4,416.4 504.1,419.2 507.2,422.7 510.3,421.1 515.0,421.1 517.8,426.3 522.0,415.3 525.2,413.3 529.1,418.5 536.1,422.0 543.1,411.8 547.0,413.8 550.2,422.4 554.8,426.3 560.3,420.8 565.0,416.4 569.4,421.6 574.4,417.4 579.1,415.8 583.8,412.7 587.7,415.3 591.6,413.0 595.5,409.6 598.6,411.8 602.5,408.3 608.8,408.6 613.4,415.3 616.6,413.3 619.7,417.7 624.4,427.8 632.2,429.4 640.0,433.6 642.3,431.8 647.0,434.6 650.0,432.1 656.2,438.3 660.9,438.8 664.1,435.2 670.3,436.8 675.0,440.3 678.9,442.4 683.6,438.3 687.5,429.0 690.6,427.8 694.5,415.3 698.4,412.7 702.3,420.0 706.2,418.9 712.5,418.5 716.4,410.7 720.3,420.0 726.6,423.2 731.2,423.6 739.1,435.7 743.0,420.8 748.4,415.3 752.3,416.1 757.0,423.6 760.9,420.5 767.2,423.6 775.0,412.7 781.2,426.3 786.7,429.4 791.4,427.4 799.2,427.8 804.7,432.5 810.0,434.6 815.5,428.6 820.2,427.8 823.3,425.8 826.4,420.0 834.2,425.8 838.1,417.7 841.2,416.4 845.9,418.0 850.6,414.6 853.0,414.9 856.9,422.1 861.6,425.5 866.2,423.2 870.2,418.5 875.6,424.7 879.5,430.2 889.7,436.4 895.2,428.6 900.6,415.3 910.0,407.5 916.2,411.4 919.4,411.8 926.4,417.4 929.5,411.1 935.0,408.0 939.7,405.5 944.4,407.5 947.5,404.9 952.2,403.9 958.4,401.3 960.0,402.8 962.3,417.4 967.0,413.8" fill="none" stroke="#e8c840" stroke-width="1" shape-rendering="crispEdges"/>
<g shape-rendering="crispEdges">
<rect x="11" y="503" width="2" height="18" fill="#c050e0"/>
<rect x="16" y="504" width="2" height="17" fill="#c050e0"/>
<rect x="20" y="504" width="2" height="17" fill="#c050e0"/>
<rect x="24" y="504" width="2" height="17" fill="#c050e0"/>
<rect x="27" y="503" width="2" height="18" fill="#c050e0"/>
<rect x="31" y="500" width="2" height="21" fill="#c050e0"/>
<rect x="35" y="498" width="2" height="23" fill="#c050e0"/>
<rect x="38" y="498" width="2" height="23" fill="#c050e0"/>
<rect x="42" y="498" width="2" height="23" fill="#c050e0"/>
<rect x="45" y="497" width="2" height="24" fill="#c050e0"/>
<rect x="49" y="497" width="2" height="24" fill="#c050e0"/>
<rect x="53" y="503" width="2" height="18" fill="#c050e0"/>
<rect x="56" y="505" width="2" height="16" fill="#c050e0"/>
<rect x="60" y="509" width="2" height="12" fill="#c050e0"/>
<rect x="64" y="514" width="2" height="7" fill="#c050e0"/>
<rect x="68" y="516" width="2" height="5" fill="#c050e0"/>
<rect x="71" y="516" width="2" height="5" fill="#c050e0"/>
<rect x="75" y="514" width="2" height="7" fill="#c050e0"/>
<rect x="78" y="512" width="2" height="9" fill="#c050e0"/>
<rect x="82" y="510" width="2" height="11" fill="#c050e0"/>
<rect x="85" y="512" width="2" height="9" fill="#c050e0"/>
<rect x="89" y="513" width="2" height="8" fill="#c050e0"/>
<rect x="92" y="518" width="2" height="3" fill="#c050e0"/>
<rect x="99" y="521" width="2" height="3" fill="#c050e0"/>
<rect x="103" y="521" width="2" height="6" fill="#c050e0"/>
<rect x="107" y="521" width="2" height="10" fill="#c050e0"/>
<rect x="111" y="521" width="2" height="6" fill="#c050e0"/>
<rect x="116" y="521" width="2" height="4" fill="#c050e0"/>
<rect x="119" y="519" width="2" height="2" fill="#c050e0"/>
<rect x="123" y="513" width="2" height="8" fill="#c050e0"/>
<rect x="126" y="512" width="2" height="9" fill="#c050e0"/>
<rect x="130" y="514" width="2" height="7" fill="#c050e0"/>
<rect x="133" y="516" width="2" height="5" fill="#c050e0"/>
<rect x="137" y="515" width="2" height="6" fill="#c050e0"/>
<rect x="140" y="518" width="2" height="3" fill="#c050e0"/>
<rect x="145" y="520" width="2" height="1" fill="#c050e0"/>
<rect x="150" y="520" width="2" height="1" fill="#c050e0"/>
<rect x="153" y="520" width="2" height="1" fill="#c050e0"/>
<rect x="157" y="521" width="2" height="2" fill="#c050e0"/>
<rect x="160" y="521" width="2" height="4" fill="#c050e0"/>
<rect x="164" y="521" width="2" height="6" fill="#c050e0"/>
<rect x="167" y="521" width="2" height="11" fill="#c050e0"/>
<rect x="171" y="521" width="2" height="12" fill="#c050e0"/>
<rect x="174" y="521" width="2" height="13" fill="#c050e0"/>
<rect x="178" y="521" width="2" height="15" fill="#c050e0"/>
<rect x="181" y="521" width="2" height="13" fill="#c050e0"/>
<rect x="185" y="521" width="2" height="12" fill="#c050e0"/>
<rect x="188" y="521" width="2" height="9" fill="#c050e0"/>
<rect x="192" y="521" width="2" height="7" fill="#c050e0"/>
<rect x="195" y="521" width="2" height="5" fill="#c050e0"/>
<rect x="199" y="521" width="2" height="4" fill="#c050e0"/>
<rect x="204" y="521" width="2" height="9" fill="#c050e0"/>
<rect x="207" y="521" width="2" height="12" fill="#c050e0"/>
<rect x="211" y="521" width="2" height="14" fill="#c050e0"/>
<rect x="214" y="521" width="2" height="15" fill="#c050e0"/>
<rect x="218" y="521" width="2" height="13" fill="#c050e0"/>
<rect x="221" y="521" width="2" height="12" fill="#c050e0"/>
<rect x="225" y="521" width="2" height="10" fill="#c050e0"/>
<rect x="228" y="521" width="2" height="7" fill="#c050e0"/>
<rect x="232" y="521" width="2" height="6" fill="#c050e0"/>
<rect x="235" y="521" width="2" height="6" fill="#c050e0"/>
<rect x="239" y="521" width="2" height="5" fill="#c050e0"/>
<rect x="243" y="521" width="2" height="6" fill="#c050e0"/>
<rect x="243" y="521" width="2" height="6" fill="#c050e0"/>
<rect x="248" y="520" width="2" height="1" fill="#c050e0"/>
<rect x="252" y="517" width="2" height="4" fill="#c050e0"/>
<rect x="255" y="514" width="2" height="7" fill="#c050e0"/>
<rect x="259" y="516" width="2" height="5" fill="#c050e0"/>
<rect x="262" y="518" width="2" height="3" fill="#c050e0"/>
<rect x="266" y="521" width="2" height="2" fill="#c050e0"/>
<rect x="269" y="521" width="2" height="5" fill="#c050e0"/>
<rect x="273" y="521" width="2" height="9" fill="#c050e0"/>
<rect x="276" y="521" width="2" height="12" fill="#c050e0"/>
<rect x="280" y="521" width="2" height="13" fill="#c050e0"/>
<rect x="284" y="521" width="2" height="10" fill="#c050e0"/>
<rect x="287" y="521" width="2" height="6" fill="#c050e0"/>
<rect x="291" y="521" width="2" height="3" fill="#c050e0"/>
<rect x="299" y="520" width="2" height="1" fill="#c050e0"/>
<rect x="303" y="519" width="2" height="2" fill="#c050e0"/>
<rect x="307" y="517" width="2" height="4" fill="#c050e0"/>
<rect x="310" y="513" width="2" height="8" fill="#c050e0"/>
<rect x="314" y="507" width="2" height="14" fill="#c050e0"/>
<rect x="318" y="507" width="2" height="14" fill="#c050e0"/>
<rect x="321" y="509" width="2" height="12" fill="#c050e0"/>
<rect x="325" y="516" width="2" height="5" fill="#c050e0"/>
<rect x="328" y="518" width="2" height="3" fill="#c050e0"/>
<rect x="332" y="519" width="2" height="2" fill="#c050e0"/>
<rect x="347" y="521" width="2" height="1" fill="#c050e0"/>
<rect x="350" y="521" width="2" height="2" fill="#c050e0"/>
<rect x="354" y="521" width="2" height="4" fill="#c050e0"/>
<rect x="357" y="521" width="2" height="9" fill="#c050e0"/>
<rect x="361" y="521" width="2" height="9" fill="#c050e0"/>
<rect x="364" y="521" width="2" height="6" fill="#c050e0"/>
<rect x="368" y="521" width="2" height="4" fill="#c050e0"/>
<rect x="371" y="519" width="2" height="2" fill="#c050e0"/>
<rect x="375" y="516" width="2" height="5" fill="#c050e0"/>
<rect x="378" y="519" width="2" height="2" fill="#c050e0"/>
<rect x="382" y="520" width="2" height="1" fill="#c050e0"/>
<rect x="385" y="521" width="2" height="2" fill="#c050e0"/>
<rect x="389" y="521" width="2" height="4" fill="#c050e0"/>
<rect x="393" y="521" width="2" height="5" fill="#c050e0"/>
<rect x="396" y="521" width="2" height="4" fill="#c050e0"/>
<rect x="400" y="521" width="2" height="3" fill="#c050e0"/>
<rect x="403" y="521" width="2" height="4" fill="#c050e0"/>
<rect x="407" y="521" width="2" height="5" fill="#c050e0"/>
<rect x="410" y="521" width="2" height="6" fill="#c050e0"/>
<rect x="414" y="521" width="2" height="5" fill="#c050e0"/>
<rect x="417" y="521" width="2" height="4" fill="#c050e0"/>
<rect x="421" y="521" width="2" height="3" fill="#c050e0"/>
<rect x="424" y="521" width="2" height="2" fill="#c050e0"/>
<rect x="428" y="521" width="2" height="2" fill="#c050e0"/>
<rect x="431" y="521" width="2" height="4" fill="#c050e0"/>
<rect x="435" y="521" width="2" height="2" fill="#c050e0"/>
<rect x="445" y="520" width="2" height="1" fill="#c050e0"/>
<rect x="450" y="520" width="2" height="1" fill="#c050e0"/>
<rect x="455" y="521" width="2" height="2" fill="#c050e0"/>
<rect x="458" y="521" width="2" height="4" fill="#c050e0"/>
<rect x="462" y="521" width="2" height="4" fill="#c050e0"/>
<rect x="465" y="521" width="2" height="2" fill="#c050e0"/>
<rect x="469" y="521" width="2" height="1" fill="#c050e0"/>
<rect x="475" y="518" width="2" height="3" fill="#c050e0"/>
<rect x="476" y="519" width="2" height="2" fill="#c050e0"/>
<rect x="479" y="517" width="2" height="4" fill="#c050e0"/>
<rect x="483" y="518" width="2" height="3" fill="#c050e0"/>
<rect x="491" y="520" width="2" height="1" fill="#c050e0"/>
<rect x="494" y="518" width="2" height="3" fill="#c050e0"/>
<rect x="498" y="512" width="2" height="9" fill="#c050e0"/>
<rect x="502" y="510" width="2" height="11" fill="#c050e0"/>
<rect x="506" y="510" width="2" height="11" fill="#c050e0"/>
<rect x="510" y="511" width="2" height="10" fill="#c050e0"/>
<rect x="513" y="512" width="2" height="9" fill="#c050e0"/>
<rect x="516" y="515" width="2" height="6" fill="#c050e0"/>
<rect x="520" y="511" width="2" height="10" fill="#c050e0"/>
<rect x="524" y="510" width="2" height="11" fill="#c050e0"/>
<rect x="527" y="510" width="2" height="11" fill="#c050e0"/>
<rect x="531" y="512" width="2" height="9" fill="#c050e0"/>
<rect x="535" y="515" width="2" height="6" fill="#c050e0"/>
<rect x="539" y="515" width="2" height="6" fill="#c050e0"/>
<rect x="543" y="512" width="2" height="9" fill="#c050e0"/>
<rect x="546" y="511" width="2" height="10" fill="#c050e0"/>
<rect x="550" y="515" width="2" height="6" fill="#c050e0"/>
<rect x="554" y="520" width="2" height="1" fill="#c050e0"/>
<rect x="564" y="520" width="2" height="1" fill="#c050e0"/>
<rect x="568" y="520" width="2" height="1" fill="#c050e0"/>
<rect x="572" y="518" width="2" height="3" fill="#c050e0"/>
<rect x="576" y="518" width="2" height="3" fill="#c050e0"/>
<rect x="579" y="517" width="2" height="4" fill="#c050e0"/>
<rect x="583" y="516" width="2" height="5" fill="#c050e0"/>
<rect x="587" y="515" width="2" height="6" fill="#c050e0"/>
<rect x="591" y="515" width="2" height="6" fill="#c050e0"/>
<rect x="595" y="513" width="2" height="8" fill="#c050e0"/>
<rect x="599" y="513" width="2" height="8" fill="#c050e0"/>
<rect x="602" y="513" width="2" height="8" fill="#c050e0"/>
<rect x="606" y="513" width="2" height="8" fill="#c050e0"/>
<rect x="611" y="516" width="2" height="5" fill="#c050e0"/>
<rect x="615" y="517" width="2" height="4" fill="#c050e0"/>
<rect x="623" y="521" width="2" height="5" fill="#c050e0"/>
<rect x="626" y="521" width="2" height="6" fill="#c050e0"/>
<rect x="630" y="521" width="2" height="9" fill="#c050e0"/>
<rect x="634" y="521" width="2" height="11" fill="#c050e0"/>
<rect x="638" y="521" width="2" height="13" fill="#c050e0"/>
<rect x="642" y="521" width="2" height="13" fill="#c050e0"/>
<rect x="645" y="521" width="2" height="13" fill="#c050e0"/>
<rect x="649" y="521" width="2" height="14" fill="#c050e0"/>
<rect x="653" y="521" width="2" height="13" fill="#c050e0"/>
<rect x="657" y="521" width="2" height="14" fill="#c050e0"/>
<rect x="661" y="521" width="2" height="13" fill="#c050e0"/>
<rect x="665" y="521" width="2" height="11" fill="#c050e0"/>
<rect x="668" y="521" width="2" height="10" fill="#c050e0"/>
<rect x="672" y="521" width="2" height="9" fill="#c050e0"/>
<rect x="676" y="521" width="2" height="9" fill="#c050e0"/>
<rect x="680" y="521" width="2" height="8" fill="#c050e0"/>
<rect x="684" y="521" width="2" height="4" fill="#c050e0"/>
<rect x="687" y="521" width="2" height="1" fill="#c050e0"/>
<rect x="692" y="516" width="2" height="5" fill="#c050e0"/>
<rect x="696" y="512" width="2" height="9" fill="#c050e0"/>
<rect x="700" y="511" width="2" height="10" fill="#c050e0"/>
<rect x="704" y="511" width="2" height="10" fill="#c050e0"/>
<rect x="708" y="511" width="2" height="10" fill="#c050e0"/>
<rect x="712" y="511" width="2" height="10" fill="#c050e0"/>
<rect x="715" y="510" width="2" height="11" fill="#c050e0"/>
<rect x="719" y="512" width="2" height="9" fill="#c050e0"/>
<rect x="723" y="513" width="2" height="8" fill="#c050e0"/>
<rect x="723" y="513" width="2" height="8" fill="#c050e0"/>
<rect x="726" y="516" width="2" height="5" fill="#c050e0"/>
<rect x="727" y="515" width="2" height="6" fill="#c050e0"/>
<rect x="730" y="518" width="2" height="3" fill="#c050e0"/>
<rect x="737" y="521" width="2" height="3" fill="#c050e0"/>
<rect x="741" y="521" width="2" height="1" fill="#c050e0"/>
<rect x="744" y="520" width="2" height="1" fill="#c050e0"/>
<rect x="748" y="517" width="2" height="4" fill="#c050e0"/>
<rect x="752" y="517" width="2" height="4" fill="#c050e0"/>
<rect x="756" y="520" width="2" height="1" fill="#c050e0"/>
<rect x="760" y="520" width="2" height="1" fill="#c050e0"/>
<rect x="763" y="520" width="2" height="1" fill="#c050e0"/>
<rect x="770" y="520" width="2" height="1" fill="#c050e0"/>
<rect x="774" y="516" width="2" height="5" fill="#c050e0"/>
<rect x="777" y="517" width="2" height="4" fill="#c050e0"/>
<rect x="785" y="521" width="2" height="5" fill="#c050e0"/>
<rect x="789" y="521" width="2" height="5" fill="#c050e0"/>
<rect x="793" y="521" width="2" height="6" fill="#c050e0"/>
<rect x="796" y="521" width="2" height="6" fill="#c050e0"/>
<rect x="800" y="521" width="2" height="6" fill="#c050e0"/>
<rect x="804" y="521" width="2" height="8" fill="#c050e0"/>
<rect x="808" y="521" width="2" height="9" fill="#c050e0"/>
<rect x="812" y="521" width="2" height="8" fill="#c050e0"/>
<rect x="814" y="521" width="2" height="6" fill="#c050e0"/>
<rect x="818" y="521" width="2" height="5" fill="#c050e0"/>
<rect x="822" y="521" width="2" height="3" fill="#c050e0"/>
<rect x="829" y="520" width="2" height="1" fill="#c050e0"/>
<rect x="833" y="520" width="2" height="1" fill="#c050e0"/>
<rect x="837" y="516" width="2" height="5" fill="#c050e0"/>
<rect x="841" y="515" width="2" height="6" fill="#c050e0"/>
<rect x="845" y="513" width="2" height="8" fill="#c050e0"/>
<rect x="849" y="512" width="2" height="9" fill="#c050e0"/>
<rect x="852" y="513" width="2" height="8" fill="#c050e0"/>
<rect x="856" y="515" width="2" height="6" fill="#c050e0"/>
<rect x="860" y="517" width="2" height="4" fill="#c050e0"/>
<rect x="864" y="520" width="2" height="1" fill="#c050e0"/>
<rect x="868" y="520" width="2" height="1" fill="#c050e0"/>
<rect x="871" y="518" width="2" height="3" fill="#c050e0"/>
<rect x="875" y="520" width="2" height="1" fill="#c050e0"/>
<rect x="879" y="521" width="2" height="3" fill="#c050e0"/>
<rect x="883" y="521" width="2" height="5" fill="#c050e0"/>
<rect x="887" y="521" width="2" height="8" fill="#c050e0"/>
<rect x="890" y="521" width="2" height="9" fill="#c050e0"/>
<rect x="894" y="521" width="2" height="4" fill="#c050e0"/>
<rect x="898" y="521" width="2" height="1" fill="#c050e0"/>
<rect x="902" y="517" width="2" height="4" fill="#c050e0"/>
<rect x="906" y="511" width="2" height="10" fill="#c050e0"/>
<rect x="909" y="508" width="2" height="13" fill="#c050e0"/>
<rect x="913" y="507" width="2" height="14" fill="#c050e0"/>
<rect x="917" y="508" width="2" height="13" fill="#c050e0"/>
<rect x="921" y="511" width="2" height="10" fill="#c050e0"/>
<rect x="925" y="512" width="2" height="9" fill="#c050e0"/>
<rect x="928" y="513" width="2" height="8" fill="#c050e0"/>
<rect x="932" y="513" width="2" height="8" fill="#c050e0"/>
<rect x="936" y="512" width="2" height="9" fill="#c050e0"/>
<rect x="940" y="511" width="2" height="10" fill="#c050e0"/>
<rect x="944" y="511" width="2" height="10" fill="#c050e0"/>
<rect x="948" y="511" width="2" height="10" fill="#c050e0"/>
<rect x="951" y="511" width="2" height="10" fill="#c050e0"/>
<rect x="955" y="511" width="2" height="10" fill="#c050e0"/>
<rect x="959" y="515" width="2" height="6" fill="#c050e0"/>
<rect x="963" y="518" width="2" height="3" fill="#c050e0"/>
</g>
<g fill="none" stroke-width="1" shape-rendering="crispEdges">
<polyline points="13.5,564.9 14.1,564.3 15.5,562.5 17.6,560.1 19.9,557.3 22.2,554.5 24.1,552.0 25.7,549.7 27.3,547.4 28.8,545.1 30.4,542.8 31.9,540.4 33.4,538.0 35.0,535.5 36.5,532.9 38.1,530.3 39.6,527.7 41.2,525.2 42.8,522.7 44.3,520.4 45.9,518.1 47.5,515.9 49.1,513.7 50.7,511.7 52.2,509.8 53.4,508.4 54.5,507.1 55.6,505.9 56.7,504.8 57.9,503.7 59.2,502.8 60.6,502.0 62.1,501.4 63.7,500.9 65.3,500.4 66.9,499.9 68.6,499.3 70.5,498.6 72.4,497.9 74.4,497.1 76.4,496.3 78.4,495.5 80.3,494.6 82.3,493.4 84.2,492.1 86.1,490.6 88.1,489.3 90.0,488.2 92.0,487.6 93.9,487.5 95.8,487.6 97.8,488.0 99.7,488.6 101.7,489.3 103.7,489.9 106.0,490.8 108.3,492.1 110.7,493.4 113.1,494.7 115.5,495.5 117.8,495.8 120.2,495.3 122.5,494.3 124.9,492.9 127.3,491.3 129.6,489.8 131.9,488.7 133.9,487.9 135.9,487.2 137.8,486.6 139.8,486.0 141.7,485.5 143.6,485.2 145.4,484.9 147.2,484.7 148.9,484.6 150.7,484.6 152.4,484.8 154.1,485.2 155.9,485.9 157.7,486.9 159.4,488.1 161.1,489.5 162.9,490.9 164.7,492.3 166.9,494.1 169.2,496.1 171.6,498.1 173.9,500.2 176.3,502.2 178.7,504.0 181.0,505.6 183.4,507.1 185.8,508.5 188.1,509.8 190.5,511.0 192.8,512.2 194.8,513.1 196.8,513.8 198.8,514.4 200.7,515.0 202.6,515.8 204.5,516.9 206.5,518.5 208.5,520.4 210.3,522.5 212.2,524.6 214.1,526.7 216.2,528.6 218.4,530.3 220.8,532.0 223.3,533.6 225.7,535.1 228.1,536.6 230.3,538.0 232.0,539.1 233.6,540.1 235.2,541.1 236.8,542.1 238.4,543.0 240.0,543.8 241.5,544.6 243.1,545.3 244.6,546.1 246.2,546.7 247.8,547.1 249.4,547.3 251.3,547.1 253.2,546.5 255.2,545.7 257.2,544.9 259.2,544.2 261.1,543.8 262.7,543.7 264.2,543.7 265.8,543.8 267.3,544.0 268.9,544.4 270.5,545.0 273.1,546.5 275.7,548.8 278.5,551.4 281.3,554.1 284.1,556.4 286.9,557.9 289.2,558.6 291.6,558.9 294.0,559.0 296.4,558.9 298.7,558.8 300.9,558.6 302.6,558.5 304.2,558.3 305.7,558.1 307.2,557.8 308.8,557.3 310.3,556.7 312.3,555.5 314.3,554.0 316.3,552.3 318.3,550.5 320.2,548.7 322.0,547.3 323.2,546.4 324.4,545.5 325.5,544.6 326.6,543.8 327.8,543.2 329.1,542.6 330.8,542.1 332.7,541.8 334.7,541.6 336.8,541.5 338.8,541.5 340.8,541.5 342.7,541.5 344.7,541.5 346.6,541.6 348.6,541.7 350.5,542.1 352.5,542.6 354.8,543.6 357.1,545.1 359.5,546.8 361.8,548.5 364.2,549.9 366.6,550.9 368.9,551.3 371.2,551.3 373.6,551.1 375.9,550.9 378.3,550.8 380.6,550.9 382.9,551.3 385.2,551.8 387.5,552.4 389.9,553.1 392.2,553.7 394.7,554.4 397.7,555.2 400.8,555.9 404.0,556.8 407.3,557.6 410.4,558.3 413.4,559.1 415.8,559.7 418.2,560.4 420.4,561.0 422.7,561.6 425.0,562.2 427.5,562.6 430.5,563.0 433.6,563.2 436.8,563.3 440.1,563.4 443.2,563.5 446.2,563.7 448.7,563.9 451.1,564.1 453.5,564.2 455.9,564.4 458.1,564.7 460.3,564.9 462.0,565.2 463.6,565.5 465.2,565.9 466.7,566.2 468.3,566.4 470.0,566.5 472.0,566.4 474.1,566.0 476.2,565.5 478.4,565.0 480.6,564.5 482.7,564.0 484.8,563.6 486.9,563.3 489.0,563.0 491.2,562.7 493.3,562.1 495.4,561.4 497.9,560.2 500.5,558.6 503.0,556.8 505.5,555.0 508.1,553.1 510.6,551.3 513.1,549.6 515.7,547.8 518.2,546.1 520.8,544.3 523.3,542.7 525.9,541.1 528.4,539.7 531.0,538.4 533.6,537.1 536.1,535.9 538.6,534.7 541.1,533.5 543.2,532.3 545.3,531.1 547.3,530.0 549.4,528.8 551.5,527.9 553.8,527.1 556.6,526.6 559.5,526.4 562.6,526.5 565.7,526.5 568.7,526.3 571.6,525.9 574.2,525.1 576.8,524.2 579.3,523.1 581.8,521.9 584.3,520.7 586.8,519.5 589.3,518.3 591.9,517.0 594.4,515.6 596.9,514.3 599.4,513.0 602.0,511.9 604.6,510.8 607.2,509.6 609.8,508.5 612.4,507.6 614.9,507.0 617.3,506.8 619.1,507.0 620.9,507.4 622.5,508.0 624.2,508.8 625.8,509.7 627.4,510.6 629.1,511.8 630.8,513.1 632.5,514.6 634.1,516.2 635.8,517.8 637.6,519.5 640.0,521.7 642.4,524.0 645.0,526.4 647.6,528.8 650.2,531.2 652.8,533.5 655.3,535.7 657.8,537.9 660.3,540.1 662.8,542.2 665.4,544.3 668.1,546.2 671.0,548.2 674.1,550.3 677.2,552.4 680.3,554.1 683.2,555.5 685.8,556.3 687.2,556.5 688.5,556.5 689.7,556.3 690.9,556.0 692.2,555.6 693.5,555.1 695.5,554.1 697.6,552.8 699.7,551.2 701.8,549.5 704.0,547.8 706.2,546.2 708.5,544.6 710.8,542.8 713.1,541.1 715.5,539.4 717.8,537.8 720.0,536.5 721.7,535.5 723.5,534.6 725.1,533.7 726.8,533.0 728.5,532.5 730.2,532.2 731.9,532.3 733.5,532.7 735.2,533.4 736.8,534.0 738.5,534.6 740.3,534.8 742.3,534.7 744.4,534.4 746.6,533.9 748.7,533.3 750.9,532.7 753.0,532.2 755.1,531.8 757.2,531.4 759.3,530.9 761.4,530.5 763.5,530.1 765.7,529.7 768.2,529.2 770.7,528.5 773.2,527.9 775.8,527.3 778.4,527.0 780.9,527.1 783.5,527.6 786.0,528.5 788.6,529.7 791.1,530.9 793.7,532.3 796.2,533.5 798.7,534.7 801.3,536.0 803.8,537.4 806.3,538.7 808.8,540.0 811.4,541.1 813.9,542.2 816.5,543.3 819.1,544.3 821.7,545.2 824.2,545.9 826.7,546.2 828.9,546.2 831.0,546.0 833.0,545.6 835.1,545.0 837.2,544.3 839.3,543.6 841.8,542.5 844.4,541.2 847.0,539.7 849.5,538.1 852.1,536.7 854.6,535.5 856.8,534.6 858.9,533.8 861.1,533.1 863.2,532.5 865.3,531.9 867.3,531.5 869.0,531.2 870.7,530.9 872.4,530.7 874.1,530.6 875.7,530.7 877.4,530.9 879.1,531.4 880.8,532.0 882.5,532.9 884.2,533.8 885.9,534.7 887.6,535.5 889.3,536.3 891.0,537.3 892.7,538.2 894.4,539.1 896.1,539.6 897.8,539.8 899.5,539.5 901.2,538.9 902.8,538.1 904.5,537.0 906.2,535.9 907.9,534.8 910.0,533.3 912.1,531.7 914.2,529.8 916.3,528.0 918.4,526.2 920.6,524.6 922.7,523.2 924.8,522.0 926.9,520.7 929.1,519.5 931.2,518.3 933.3,517.0 935.4,515.6 937.6,514.1 939.7,512.6 941.8,511.1 943.9,509.6 946.0,508.1 948.1,506.5 950.3,504.9 952.5,503.2 954.6,501.6 956.7,500.3 958.7,499.2 960.2,498.6 961.9,498.2 963.5,497.8 964.9,497.6 965.9,497.4 966.3,497.4" stroke="#f0f0f0"/>
<polyline points="13.5,547.3 13.9,546.9 15.0,545.7 16.6,544.0 18.4,542.0 20.2,539.9 21.7,538.0 23.3,535.7 24.9,533.2 26.6,530.6 28.1,527.9 29.7,525.3 31.1,522.7 32.3,520.4 33.5,518.0 34.6,515.7 35.7,513.4 36.9,511.1 38.1,508.7 39.6,505.8 41.1,502.7 42.7,499.6 44.3,496.7 46.0,494.1 47.5,492.3 48.3,491.6 49.0,491.1 49.7,490.7 50.5,490.3 51.3,490.1 52.2,489.9 53.6,489.8 55.1,489.8 56.8,490.0 58.5,490.3 60.1,490.7 61.6,491.1 62.8,491.6 64.0,492.4 65.1,493.2 66.2,494.0 67.4,494.5 68.6,494.6 70.5,494.1 72.5,493.0 74.7,491.4 76.8,489.7 78.7,487.9 80.3,486.4 81.2,485.3 82.0,484.2 82.7,483.0 83.3,482.0 84.1,481.1 85.0,480.5 86.2,480.2 87.6,480.2 89.0,480.4 90.5,480.7 91.9,481.2 93.2,481.7 94.3,482.3 95.3,482.9 96.2,483.7 97.1,484.5 98.1,485.4 99.0,486.4 100.2,487.8 101.4,489.3 102.6,491.0 103.8,492.7 105.0,494.3 106.1,495.8 106.9,497.0 107.7,498.2 108.4,499.4 109.2,500.4 109.9,501.2 110.8,501.6 111.7,501.6 112.7,501.3 113.7,500.7 114.7,499.9 115.7,499.1 116.6,498.1 117.7,496.3 118.6,493.8 119.5,491.1 120.3,488.4 121.3,485.9 122.5,484.1 123.5,483.1 124.6,482.3 125.7,481.7 126.9,481.1 128.2,480.7 129.5,480.5 131.3,480.5 133.1,480.8 135.1,481.3 137.2,481.9 139.2,482.5 141.2,482.9 143.2,483.1 145.3,483.1 147.4,483.2 149.4,483.2 151.3,483.5 153.0,484.1 154.4,484.9 155.6,485.9 156.7,487.1 157.8,488.4 158.9,489.7 160.0,491.1 161.5,493.0 163.1,495.1 164.7,497.4 166.3,499.7 167.9,501.9 169.4,504.0 170.6,505.7 171.8,507.4 172.9,509.0 174.0,510.5 175.2,512.0 176.4,513.4 177.5,514.6 178.6,515.8 179.8,516.9 181.0,517.9 182.2,518.7 183.4,519.2 184.5,519.3 185.7,519.2 186.9,519.0 188.1,518.6 189.3,518.3 190.5,518.0 191.7,517.8 192.9,517.5 194.1,517.3 195.3,517.1 196.4,516.9 197.5,516.9 198.3,516.9 199.2,516.9 200.0,517.0 200.7,517.2 201.5,517.5 202.2,518.0 203.5,519.9 204.6,522.7 205.7,526.1 206.7,529.7 207.9,533.0 209.2,535.6 210.3,537.1 211.4,538.3 212.5,539.4 213.7,540.5 214.9,541.5 216.2,542.6 217.6,543.9 219.2,545.2 220.7,546.6 222.3,547.8 223.9,548.9 225.6,549.7 227.1,550.2 228.7,550.4 230.2,550.5 231.8,550.6 233.4,550.7 235.0,550.9 236.7,551.4 238.4,552.0 240.1,552.7 241.7,553.2 243.3,553.5 244.7,553.2 246.1,552.1 247.3,550.2 248.4,547.9 249.4,545.5 250.5,543.3 251.7,541.5 252.8,540.4 253.9,539.3 255.1,538.3 256.3,537.5 257.5,537.0 258.7,536.8 259.9,537.0 261.1,537.5 262.3,538.3 263.6,539.2 264.7,540.3 265.8,541.5 267.1,543.4 268.3,545.6 269.4,548.1 270.5,550.7 271.6,553.2 272.8,555.5 273.9,557.6 275.0,559.7 276.1,561.9 277.3,563.8 278.5,565.3 279.8,566.1 280.9,566.2 282.0,566.0 283.2,565.6 284.4,564.9 285.7,564.3 286.9,563.7 288.4,563.1 289.9,562.3 291.4,561.6 293.0,560.7 294.6,559.9 296.2,559.1 298.1,558.2 300.2,557.4 302.3,556.6 304.4,555.7 306.3,554.5 308.0,553.2 309.5,551.4 310.7,549.2 311.7,546.9 312.7,544.5 313.8,542.3 315.0,540.3 316.1,538.8 317.2,537.3 318.4,535.8 319.6,534.6 320.8,533.7 322.0,533.3 323.1,533.5 324.3,534.2 325.4,535.1 326.6,536.2 327.8,537.2 329.1,538.0 330.5,538.5 332.1,539.0 333.6,539.3 335.2,539.6 336.8,539.9 338.4,540.3 340.0,540.6 341.6,540.9 343.2,541.1 344.8,541.4 346.3,541.9 347.8,542.6 349.5,543.8 351.1,545.2 352.6,546.9 354.1,548.7 355.6,550.4 357.2,552.0 358.8,553.6 360.4,555.5 362.0,557.3 363.6,558.9 365.1,559.9 366.6,560.2 368.2,559.1 369.7,556.6 371.2,553.4 372.7,550.2 374.2,547.5 375.9,546.2 377.4,546.1 378.9,546.6 380.5,547.5 382.2,548.6 383.8,549.8 385.3,550.9 386.9,552.2 388.5,553.8 390.0,555.5 391.5,557.1 393.1,558.4 394.7,559.1 396.2,559.1 397.8,558.6 399.4,557.9 400.9,557.2 402.5,556.7 404.0,556.7 405.6,557.5 407.2,559.0 408.8,560.8 410.3,562.6 411.9,564.0 413.4,564.9 414.6,565.0 415.7,564.9 416.8,564.5 418.0,564.1 419.2,563.8 420.5,563.7 422.3,563.9 424.2,564.3 426.2,564.9 428.3,565.4 430.3,565.9 432.2,566.1 433.8,566.1 435.4,566.0 437.0,565.9 438.6,565.6 440.1,565.3 441.5,564.9 442.8,564.4 444.0,563.6 445.2,562.8 446.3,562.1 447.5,561.6 448.6,561.4 449.8,561.7 450.9,562.4 452.0,563.3 453.2,564.3 454.3,565.3 455.6,566.1 457.1,566.9 458.7,567.6 460.4,568.4 462.0,569.0 463.6,569.4 465.0,569.6 465.9,569.5 466.7,569.3 467.5,569.1 468.2,568.7 469.1,568.3 470.0,567.8 471.8,566.7 473.9,565.2 476.1,563.6 478.3,562.0 480.6,560.8 482.7,560.1 484.5,560.2 486.2,560.8 488.0,561.6 489.7,562.4 491.3,562.9 492.9,562.7 494.8,561.3 496.4,558.9 497.9,556.0 499.5,552.8 501.1,549.9 503.0,547.5 504.9,545.9 507.0,544.6 509.2,543.5 511.4,542.4 513.6,541.2 515.7,539.8 517.9,538.0 520.0,535.8 522.1,533.6 524.2,531.5 526.3,529.7 528.4,528.4 530.1,527.9 531.9,527.7 533.6,527.7 535.4,527.7 537.0,527.5 538.6,527.1 540.0,526.2 541.3,524.9 542.5,523.5 543.7,522.2 544.9,521.2 546.2,520.8 547.5,521.0 548.8,521.7 550.1,522.7 551.4,523.8 552.6,525.0 553.8,525.9 554.7,526.6 555.5,527.4 556.3,528.2 557.1,528.9 557.9,529.4 558.9,529.7 560.4,529.5 562.0,528.8 563.7,527.7 565.5,526.5 567.2,525.4 569.0,524.6 570.7,524.1 572.4,523.8 574.1,523.5 575.8,523.2 577.5,522.8 579.2,522.1 581.3,520.8 583.5,519.2 585.6,517.4 587.8,515.5 589.9,513.6 591.9,511.9 593.6,510.5 595.4,509.1 597.0,507.7 598.7,506.4 600.4,505.3 602.0,504.3 603.3,503.6 604.6,503.1 605.9,502.6 607.1,502.2 608.4,501.9 609.7,501.7 611.0,501.6 612.3,501.6 613.6,501.7 614.8,501.9 616.1,502.3 617.3,503.0 619.1,504.7 620.8,507.3 622.5,510.3 624.1,513.5 625.7,516.6 627.4,519.5 629.0,522.0 630.7,524.5 632.3,527.0 634.0,529.4 635.8,531.6 637.6,533.5 639.2,534.8 641.0,535.9 642.8,536.8 644.5,537.7 646.2,538.6 647.8,539.8 649.2,541.2 650.5,542.6 651.7,544.2 652.9,545.8 654.1,547.3 655.4,548.7 656.6,549.9 657.8,551.1 659.0,552.3 660.3,553.3 661.6,554.3 663.0,555.1 664.6,555.7 666.2,556.2 667.9,556.5 669.7,556.7 671.4,557.1 673.1,557.6 674.8,558.5 676.6,559.6 678.3,560.9 680.0,561.9 681.7,562.6 683.3,562.7 685.1,561.9 686.8,560.3 688.5,558.2 690.2,555.9 691.8,553.5 693.5,551.3 695.2,549.2 696.9,547.1 698.5,544.9 700.2,542.7 701.9,540.6 703.6,538.6 705.3,536.7 707.0,534.7 708.7,532.8 710.5,531.0 712.2,529.5 713.8,528.4 714.8,527.9 715.8,527.6 716.8,527.3 717.8,527.2 718.9,527.1 720.0,527.1 721.6,527.1 723.3,527.2 725.1,527.4 726.9,527.7 728.6,528.2 730.2,528.9 731.6,530.1 732.9,531.7 734.1,533.5 735.3,535.3 736.5,536.6 737.8,537.3 739.0,537.3 740.3,536.8 741.6,536.1 742.9,535.2 744.1,534.3 745.4,533.5 746.7,532.6 747.9,531.7 749.2,530.7 750.4,529.7 751.7,528.9 753.0,528.4 754.2,528.2 755.4,528.2 756.7,528.3 758.0,528.5 759.3,528.7 760.6,528.9 762.2,529.1 764.0,529.4 765.8,529.7 767.5,529.9 769.2,530.0 770.8,529.7 772.2,529.0 773.5,527.8 774.8,526.4 776.0,525.1 777.2,524.1 778.4,523.8 779.6,524.2 780.8,525.1 782.0,526.5 783.2,528.0 784.5,529.5 786.0,530.9 788.2,532.5 790.8,534.2 793.5,535.8 796.2,537.5 798.9,539.3 801.3,541.1 803.4,543.1 805.3,545.3 807.1,547.7 809.0,549.8 810.8,551.5 812.7,552.5 814.2,552.8 815.7,552.8 817.2,552.5 818.8,552.0 820.2,551.5 821.6,550.8 823.0,549.9 824.2,548.8 825.4,547.6 826.6,546.2 827.9,544.9 829.2,543.6 830.8,542.2 832.4,540.7 834.0,539.2 835.7,537.7 837.5,536.2 839.3,534.8 841.3,533.2 843.4,531.4 845.6,529.6 847.8,528.1 849.9,526.9 852.0,526.4 853.7,526.6 855.4,527.3 857.1,528.4 858.8,529.5 860.5,530.4 862.2,530.9 863.9,530.8 865.7,530.4 867.4,529.8 869.1,529.3 870.8,528.9 872.4,528.9 873.8,529.3 875.1,529.8 876.4,530.6 877.6,531.5 878.8,532.5 880.0,533.5 881.3,534.9 882.6,536.7 883.8,538.5 885.0,540.4 886.3,542.1 887.6,543.6 888.8,544.8 890.1,546.0 891.4,547.2 892.7,548.1 894.0,548.6 895.2,548.7 896.6,547.9 897.9,546.4 899.2,544.3 900.4,542.0 901.6,539.5 902.8,537.3 904.1,534.9 905.3,532.3 906.4,529.6 907.6,526.9 908.9,524.4 910.4,522.1 911.9,520.1 913.5,518.3 915.2,516.5 917.0,514.8 918.8,513.3 920.6,511.9 922.2,510.9 923.9,510.0 925.7,509.2 927.4,508.5 929.1,507.7 930.8,506.8 932.5,505.7 934.1,504.4 935.7,503.1 937.3,501.8 939.0,500.5 940.9,499.2 943.6,497.4 946.7,495.4 950.0,493.4 953.2,491.7 956.1,490.6 958.7,490.3 960.4,490.9 962.1,492.1 963.7,493.6 965.0,495.1 966.0,496.3 966.3,496.7" stroke="#40c030"/>
</g>
<g fill="none" stroke-width="1" shape-rendering="crispEdges">
<line x1="10" y1="592.5" x2="967" y2="592.5" stroke="#c82838" stroke-dasharray="6,1,3,1"/>
<line x1="10" y1="654.5" x2="967" y2="654.5" stroke="#c82838" stroke-dasharray="6,1,3,1"/>
</g>
<g fill="none" stroke-width="1" shape-rendering="crispEdges">
<polyline points="13.5,633.8 13.9,633.2 15.0,631.5 16.6,629.1 18.3,626.3 20.1,623.4 21.7,620.9 23.2,618.3 24.8,615.5 26.3,612.7 27.9,609.9 29.5,607.1 31.1,604.5 32.6,602.1 34.0,599.7 35.5,597.3 37.0,595.1 38.7,593.2 40.5,591.6 42.3,590.5 44.3,589.5 46.4,588.7 48.5,588.1 50.5,587.9 52.2,588.1 53.6,588.6 54.8,589.5 56.0,590.6 57.1,592.0 58.1,593.5 59.2,595.1 60.9,598.2 62.4,602.1 64.0,606.3 65.5,610.7 67.0,614.9 68.6,618.5 69.9,621.2 71.3,624.1 72.7,626.9 74.1,629.3 75.5,630.9 76.8,631.4 78.2,630.4 79.6,627.9 81.0,624.5 82.3,620.7 83.7,617.0 85.0,613.8 86.1,611.3 87.3,608.5 88.4,605.9 89.5,603.5 90.7,601.8 92.0,601.0 93.1,601.1 94.3,601.6 95.6,602.6 96.8,603.8 98.0,605.3 99.1,606.8 100.6,610.0 101.8,614.1 102.8,618.8 103.8,623.7 104.8,628.4 106.1,632.6 107.3,636.1 108.7,640.0 110.0,643.7 111.4,646.9 112.9,649.2 114.3,650.2 115.3,650.1 116.2,649.5 117.2,648.5 118.2,647.2 119.2,645.8 120.1,644.3 121.8,641.1 123.4,637.0 124.9,632.4 126.5,627.6 128.0,622.9 129.5,618.5 130.9,614.4 132.2,609.8 133.5,605.3 134.8,601.4 136.2,598.6 137.7,597.4 139.0,597.9 140.4,599.4 141.9,601.7 143.4,604.3 144.7,606.9 145.9,609.2 146.8,611.2 147.6,613.2 148.2,615.3 148.9,617.3 149.7,619.2 150.6,620.9 151.6,622.3 152.7,623.8 153.8,625.1 155.1,626.3 156.3,627.2 157.6,627.9 158.7,628.1 159.9,627.9 161.1,627.6 162.3,627.3 163.5,627.1 164.7,627.4 166.3,628.5 167.9,630.3 169.4,632.6 170.9,635.0 172.5,637.4 174.0,639.6 175.6,641.9 177.1,644.4 178.7,647.0 180.2,649.2 181.8,650.8 183.4,651.3 185.4,650.3 187.3,647.7 189.3,644.2 191.3,640.2 193.3,636.1 195.1,632.6 196.7,629.3 198.3,625.5 199.7,621.7 201.2,618.4 202.8,616.0 204.5,615.0 206.3,615.6 208.3,617.5 210.4,620.3 212.5,623.6 214.4,627.0 216.2,630.2 217.9,634.2 219.4,638.9 220.7,643.8 222.1,648.3 223.7,651.8 225.6,653.7 227.0,654.0 228.5,653.7 230.1,653.0 231.7,652.1 233.4,651.1 235.0,650.2 237.0,649.1 239.1,647.9 241.1,646.6 243.2,645.2 245.2,643.6 247.0,642.0 248.8,640.1 250.4,638.0 252.0,635.8 253.4,633.5 254.9,631.3 256.4,629.1 257.8,626.9 259.1,624.4 260.5,621.9 261.8,619.7 263.2,618.1 264.6,617.4 265.9,617.7 267.3,618.6 268.7,620.0 270.1,621.7 271.5,623.7 272.8,625.6 274.8,629.3 276.8,634.3 278.7,639.6 280.6,644.6 282.6,648.4 284.5,650.2 285.5,650.3 286.5,650.0 287.5,649.5 288.5,648.7 289.5,647.7 290.4,646.6 292.3,643.2 294.0,638.2 295.6,632.4 297.3,626.4 299.0,620.8 300.9,616.2 302.3,613.4 303.8,610.8 305.4,608.3 306.9,606.1 308.6,604.4 310.3,603.3 311.6,603.0 313.0,602.9 314.4,603.2 315.8,603.5 317.1,604.0 318.5,604.5 319.9,605.0 321.4,605.6 322.8,606.3 324.1,607.2 325.5,608.1 326.7,609.2 328.0,610.7 329.2,612.5 330.3,614.5 331.4,616.6 332.5,618.8 333.7,620.9 335.1,623.6 336.5,626.6 338.0,629.7 339.5,632.6 341.2,635.2 343.1,637.3 344.9,638.5 346.8,639.3 348.8,639.9 350.8,640.4 352.9,641.1 354.8,642.0 356.9,643.7 359.0,645.9 361.0,648.3 363.0,650.5 364.9,652.0 366.6,652.5 367.9,652.1 369.1,651.1 370.2,649.7 371.3,648.0 372.4,646.2 373.6,644.3 375.8,640.2 378.1,634.6 380.5,628.6 382.9,623.1 385.3,619.1 387.6,617.4 389.2,618.0 390.7,619.8 392.3,622.3 393.8,625.1 395.4,627.9 397.0,630.2 398.5,632.0 400.0,633.9 401.5,635.6 403.0,637.3 404.6,638.6 406.4,639.6 408.2,640.1 410.1,640.2 412.2,640.1 414.2,639.9 416.2,639.7 418.1,639.6 419.7,639.7 421.3,639.8 422.8,639.9 424.4,639.9 425.9,639.9 427.5,639.6 429.4,639.0 431.3,638.1 433.3,637.0 435.2,635.9 437.2,634.8 439.2,633.8 441.3,632.8 443.5,631.8 445.7,630.8 447.9,629.9 450.1,629.3 452.1,629.1 453.8,629.2 455.4,629.5 457.0,630.0 458.6,630.7 460.1,631.6 461.5,632.6 463.2,634.5 464.8,637.1 466.3,640.0 467.8,642.7 469.2,644.7 470.8,645.5 472.3,645.0 473.9,643.6 475.4,641.6 477.0,639.3 478.6,636.9 480.2,634.9 481.8,632.8 483.4,630.5 485.0,628.2 486.7,626.1 488.4,624.5 490.3,623.5 492.3,623.5 494.4,624.3 496.6,625.4 498.8,626.6 501.0,627.3 503.0,627.3 505.2,625.9 507.4,623.3 509.4,620.2 511.4,617.1 513.5,614.6 515.7,613.4 517.7,613.6 519.8,614.5 521.9,616.0 524.1,617.6 526.2,618.9 528.4,619.7 530.5,619.8 532.6,619.6 534.7,619.2 536.9,618.7 539.0,618.4 541.1,618.4 543.2,618.7 545.4,619.1 547.5,619.7 549.7,620.4 551.8,621.2 553.8,622.2 556.0,623.8 558.2,625.9 560.3,628.2 562.4,630.2 564.5,631.8 566.5,632.4 568.3,632.1 570.1,631.3 571.8,630.0 573.5,628.4 575.1,626.6 576.7,624.8 578.6,621.9 580.3,618.2 581.8,614.3 583.4,610.4 585.0,607.0 586.8,604.5 588.0,603.4 589.2,602.5 590.4,601.8 591.7,601.2 593.0,600.9 594.4,600.7 596.3,600.9 598.5,601.4 600.7,602.3 602.9,603.3 605.1,604.5 607.1,605.7 609.0,606.9 610.8,608.2 612.5,609.7 614.2,611.2 615.8,612.8 617.3,614.6 618.8,616.6 620.1,618.7 621.2,621.0 622.4,623.4 623.6,625.9 624.9,628.6 626.8,632.9 628.8,638.0 630.8,643.3 632.9,648.4 635.2,653.0 637.6,656.5 639.2,658.2 640.8,659.8 642.5,661.1 644.3,662.1 646.0,662.7 647.8,662.9 649.8,662.3 651.9,661.0 654.0,659.1 656.1,657.1 658.3,655.3 660.5,654.0 662.5,653.3 664.6,652.8 666.7,652.4 668.9,652.2 671.0,651.8 673.1,651.4 675.3,651.0 677.5,650.6 679.6,650.2 681.8,649.7 683.9,648.8 685.8,647.6 688.3,645.0 690.5,641.6 692.6,637.6 694.6,633.3 696.6,629.0 698.5,624.8 700.5,619.9 702.3,614.3 704.1,608.6 705.9,603.5 707.9,599.8 710.0,598.1 711.8,598.4 713.7,599.8 715.8,601.9 717.8,604.4 719.7,607.0 721.4,609.5 723.1,612.2 724.7,615.1 726.1,618.1 727.5,621.3 728.8,624.3 730.2,627.3 731.5,630.0 732.7,632.7 734.0,635.4 735.2,638.0 736.5,640.4 737.8,642.6 738.8,644.2 739.8,645.9 740.8,647.5 741.9,648.8 742.9,649.8 744.1,650.2 745.5,650.0 747.0,649.2 748.5,647.9 750.1,646.3 751.6,644.5 753.0,642.6 754.9,638.6 756.5,633.2 758.0,627.3 759.6,621.8 761.2,617.7 763.2,615.9 765.1,616.6 767.0,618.9 769.1,622.1 771.3,625.6 773.6,628.8 775.9,631.1 778.0,632.1 780.2,632.6 782.5,633.0 784.7,633.3 786.8,633.9 788.6,634.9 790.2,636.5 791.4,638.5 792.5,640.8 793.6,643.2 794.8,645.5 796.2,647.6 798.0,649.9 800.1,652.4 802.2,654.9 804.5,657.0 806.7,658.5 808.9,659.1 811.0,658.7 813.3,657.5 815.5,655.7 817.6,653.6 819.7,651.2 821.6,648.9 823.6,646.0 825.4,642.8 827.0,639.4 828.5,635.8 830.1,632.1 831.7,628.6 833.3,624.8 834.8,620.5 836.3,616.3 837.9,612.4 839.7,609.2 841.9,607.0 843.8,606.1 845.9,605.6 848.2,605.5 850.5,605.7 852.6,606.2 854.6,607.0 856.6,608.4 858.4,610.4 860.1,612.9 861.7,615.6 863.2,618.3 864.7,621.0 866.1,623.9 867.3,626.9 868.4,630.1 869.5,633.2 870.8,636.1 872.4,638.8 874.2,641.1 876.3,643.2 878.4,645.2 880.7,647.0 882.9,648.7 885.1,650.2 886.8,651.4 888.6,652.7 890.4,653.9 892.1,654.8 893.7,655.3 895.2,655.3 896.7,654.5 898.0,653.0 899.3,651.1 900.5,648.8 901.6,646.3 902.8,643.8 904.6,639.6 906.4,634.6 908.1,629.2 909.7,623.7 911.4,618.3 913.0,613.4 914.3,609.3 915.5,604.8 916.6,600.5 917.8,596.8 919.2,594.1 920.6,593.0 922.2,593.7 923.9,595.9 925.7,599.0 927.5,602.6 929.2,606.3 930.8,609.5 932.2,612.8 933.4,616.5 934.5,620.3 935.6,623.7 936.9,626.2 938.4,627.3 939.9,627.0 941.5,625.8 943.3,623.9 945.0,621.6 946.8,619.3 948.5,617.2 950.5,614.5 952.4,611.3 954.4,608.0 956.3,605.1 958.2,602.9 960.0,601.9 961.2,602.2 962.6,603.1 964.0,604.3 965.2,605.6 966.0,606.6 966.3,607.0" stroke="#e8c840"/>
<polyline points="12.8,626.7 13.1,626.0 14.0,624.2 15.3,621.6 16.7,618.6 18.2,615.5 19.4,612.7 20.5,609.5 21.6,605.9 22.6,602.1 23.7,598.7 25.0,595.8 26.4,593.9 27.3,593.4 28.3,593.1 29.3,593.0 30.3,593.0 31.3,592.9 32.3,592.7 33.3,592.3 34.2,591.7 35.1,591.1 36.0,590.5 37.0,589.8 38.1,589.2 39.7,588.3 41.5,587.1 43.5,586.0 45.4,585.1 47.1,584.5 48.7,584.5 49.9,585.0 50.9,585.9 51.9,587.0 52.8,588.4 53.6,590.0 54.5,591.6 55.9,594.8 57.1,598.6 58.3,602.8 59.4,607.3 60.5,611.8 61.6,616.2 62.8,621.4 63.9,627.5 65.0,633.6 66.2,638.9 67.3,642.8 68.6,644.3 69.7,643.5 70.9,641.2 72.2,637.8 73.4,634.0 74.6,630.1 75.6,626.7 76.5,623.5 77.3,620.1 77.9,616.8 78.6,613.4 79.4,610.0 80.3,606.8 81.3,603.4 82.5,599.5 83.7,595.7 85.0,592.4 86.2,590.1 87.3,589.2 88.1,589.7 88.9,590.9 89.7,592.8 90.5,595.1 91.2,597.5 92.0,599.8 93.2,603.6 94.3,608.0 95.5,612.7 96.6,617.7 97.8,622.8 99.1,627.9 100.8,635.1 102.6,643.6 104.5,652.4 106.3,660.1 108.1,665.6 109.6,667.7 110.5,666.8 111.3,664.4 112.1,660.9 112.8,656.9 113.5,652.8 114.3,649.0 115.3,644.7 116.2,640.2 117.2,635.6 118.1,630.8 119.1,625.9 120.1,620.9 121.2,614.1 122.2,606.2 123.3,598.0 124.4,590.8 125.7,585.6 127.2,583.4 128.3,583.8 129.4,585.2 130.7,587.3 131.9,589.8 133.1,592.5 134.2,595.1 135.6,599.4 136.7,604.4 137.7,609.9 138.8,615.4 139.9,620.3 141.2,624.4 142.1,626.6 143.1,628.7 144.1,630.7 145.2,632.4 146.2,633.5 147.1,633.8 148.1,632.6 149.1,629.8 150.0,626.2 150.9,622.6 151.9,619.7 153.0,618.5 154.0,619.0 155.1,620.4 156.3,622.4 157.5,624.7 158.7,626.8 160.0,628.4 161.1,629.2 162.4,629.8 163.6,630.3 164.9,630.8 166.0,631.5 167.0,632.6 168.2,635.6 168.9,639.9 169.4,644.7 169.8,649.4 170.5,653.0 171.7,654.9 172.5,655.1 173.5,654.8 174.5,654.2 175.5,653.6 176.6,652.9 177.6,652.5 178.6,652.3 179.6,652.3 180.6,652.3 181.5,652.2 182.5,651.9 183.4,651.3 185.3,648.4 186.9,643.8 188.4,638.1 189.8,632.0 191.3,626.0 192.8,620.9 194.2,616.8 195.6,612.4 197.0,608.1 198.4,604.5 199.7,601.9 201.0,601.0 202.3,602.2 203.4,605.4 204.5,609.9 205.6,615.2 206.7,620.6 208.0,625.6 209.7,632.4 211.6,640.6 213.5,649.0 215.6,656.6 217.6,662.0 219.8,664.2 221.4,663.1 223.1,660.1 224.8,655.9 226.6,651.3 228.4,647.2 230.3,644.3 231.6,643.0 233.0,641.9 234.4,640.9 235.8,640.2 237.2,639.7 238.5,639.6 239.8,640.0 241.1,641.0 242.4,642.3 243.6,643.4 244.8,644.2 245.9,644.3 247.6,642.3 248.9,638.4 250.1,633.2 251.2,627.6 252.5,622.5 254.1,618.5 255.4,616.3 256.8,614.1 258.3,612.1 259.8,610.5 261.1,609.4 262.3,609.2 263.4,610.1 264.2,612.2 264.9,615.0 265.6,618.2 266.2,621.5 267.0,624.4 267.9,627.2 268.9,630.1 269.9,633.0 270.9,636.0 271.8,639.0 272.8,642.0 273.8,645.7 274.7,650.0 275.7,654.3 276.6,658.1 277.6,660.8 278.7,661.9 279.5,661.6 280.3,660.6 281.2,659.1 282.0,657.3 282.8,655.5 283.4,653.7 284.0,651.3 284.4,648.7 284.6,645.9 284.8,643.0 285.2,640.1 285.7,637.3 286.5,634.6 287.4,631.9 288.5,629.3 289.6,626.6 290.6,623.8 291.6,620.9 292.6,616.9 293.4,612.1 294.3,607.3 295.1,602.9 296.2,599.4 297.4,597.4 297.9,597.1 298.5,596.9 299.1,596.9 299.7,596.9 300.3,597.1 300.9,597.4 301.9,598.4 302.8,600.1 303.6,602.1 304.6,604.2 305.6,605.8 306.8,606.8 308.0,606.9 309.3,606.6 310.8,606.0 312.2,605.3 313.6,604.7 315.0,604.5 316.2,604.6 317.5,604.7 318.7,605.0 319.8,605.4 321.0,606.0 322.0,606.8 323.5,608.8 324.8,611.6 325.9,615.0 326.9,618.6 327.9,622.2 329.1,625.6 330.4,629.5 331.8,634.0 333.2,638.6 334.6,642.6 335.9,645.5 337.3,646.6 338.2,645.9 339.1,644.1 339.9,641.6 340.8,639.1 341.9,637.1 343.1,636.1 344.8,636.2 346.7,637.1 348.8,638.6 350.9,640.5 353.0,642.4 354.8,644.3 356.6,646.7 358.4,649.7 360.0,652.9 361.5,655.7 362.9,657.7 364.2,658.4 365.2,657.6 366.1,655.9 366.8,653.4 367.5,650.4 368.2,647.3 368.9,644.3 369.9,639.3 370.8,633.2 371.6,626.7 372.6,620.6 374.0,615.7 375.9,612.7 377.1,612.0 378.5,611.5 380.0,611.4 381.5,611.5 382.9,612.0 384.1,612.7 386.0,616.0 387.5,621.5 388.6,628.2 389.6,634.9 390.8,640.7 392.3,644.3 393.0,645.1 393.8,645.8 394.6,646.2 395.4,646.6 396.2,646.7 397.0,646.6 398.1,645.8 399.2,644.2 400.3,642.2 401.4,640.1 402.6,638.4 404.0,637.3 405.4,636.9 407.1,636.8 408.8,636.9 410.5,637.3 412.1,637.8 413.4,638.5 414.4,639.5 415.2,640.9 415.9,642.5 416.6,644.0 417.3,645.1 418.1,645.5 419.2,644.8 420.2,643.0 421.3,640.7 422.5,638.2 423.8,636.1 425.1,634.9 426.2,634.7 427.4,634.9 428.7,635.4 429.9,635.9 431.1,636.2 432.2,636.1 433.1,635.6 433.9,634.6 434.6,633.6 435.3,632.6 436.1,631.8 436.9,631.4 438.0,631.7 439.2,632.7 440.5,633.9 441.8,635.1 442.9,636.0 443.9,636.1 444.8,634.9 445.3,632.7 445.7,629.8 446.1,626.9 446.6,624.5 447.4,623.2 448.1,622.9 448.9,622.9 449.7,623.1 450.5,623.4 451.3,623.8 452.1,624.4 453.4,626.2 454.6,628.9 455.7,632.2 456.8,635.7 457.9,639.1 459.1,642.0 460.3,644.4 461.5,647.0 462.8,649.5 464.0,651.7 465.2,653.2 466.2,653.7 466.9,653.3 467.6,652.3 468.1,650.8 468.7,649.0 469.3,647.0 470.0,645.1 471.4,640.6 473.0,634.7 474.6,628.3 476.4,622.4 478.3,617.9 480.2,615.9 481.4,616.1 482.7,617.0 484.0,618.4 485.3,620.1 486.6,621.9 487.8,623.5 489.1,625.5 490.5,628.0 491.7,630.5 493.0,632.8 494.2,634.4 495.4,634.9 496.8,633.8 498.0,631.0 499.2,627.3 500.4,623.2 501.6,619.2 503.0,615.9 504.2,613.5 505.5,610.9 506.9,608.4 508.2,606.3 509.4,604.9 510.6,604.5 511.8,606.0 512.8,609.6 513.6,614.2 514.5,619.0 515.6,622.8 517.0,624.8 518.0,625.0 519.0,624.8 520.1,624.3 521.2,623.6 522.3,622.9 523.3,622.2 524.2,621.5 525.0,620.7 525.8,619.8 526.6,618.8 527.5,618.0 528.4,617.2 529.6,616.3 530.9,615.4 532.3,614.4 533.7,613.7 534.9,613.3 536.0,613.4 536.9,614.4 537.5,616.3 538.0,618.6 538.5,620.9 539.0,622.7 539.8,623.5 540.7,623.2 541.7,622.0 542.8,620.5 543.9,618.9 545.1,617.7 546.2,617.2 547.5,617.8 548.7,619.1 550.0,621.0 551.3,623.0 552.5,624.8 553.8,626.1 554.7,626.6 555.6,627.0 556.5,627.3 557.4,627.6 558.2,628.0 558.9,628.6 559.7,630.0 560.3,632.1 560.8,634.3 561.3,636.4 561.9,638.0 562.7,638.8 563.5,638.8 564.3,638.4 565.3,637.8 566.2,636.9 567.0,635.9 567.8,634.9 568.7,633.2 569.3,631.1 569.8,628.7 570.3,626.1 570.9,623.5 571.6,621.0 572.6,617.8 573.7,614.2 574.9,610.5 576.1,607.1 577.6,604.1 579.2,601.9 580.3,600.9 581.6,600.2 582.9,599.6 584.2,599.2 585.5,599.0 586.8,598.9 588.1,599.0 589.4,599.3 590.7,599.8 592.0,600.5 593.2,601.2 594.4,601.9 595.6,602.9 596.6,604.2 597.7,605.7 598.7,606.9 599.7,607.9 600.8,608.3 602.0,607.8 603.4,606.6 604.7,605.0 606.0,603.4 607.3,602.2 608.4,601.9 609.4,602.7 610.3,604.3 611.1,606.5 611.8,608.9 612.6,611.3 613.5,613.4 614.5,615.1 615.6,616.6 616.7,618.1 617.8,619.7 618.8,621.4 619.8,623.5 621.2,628.1 622.4,633.8 623.5,640.0 624.6,646.3 625.8,651.9 627.4,656.5 628.5,658.9 629.7,661.2 631.0,663.2 632.3,665.0 633.7,666.2 635.1,666.7 636.7,666.3 638.4,665.2 640.3,663.4 642.0,661.4 643.7,659.5 645.2,657.8 646.2,656.6 647.0,655.4 647.7,654.1 648.4,653.0 649.3,652.0 650.3,651.4 651.6,651.1 653.2,651.1 654.8,651.3 656.4,651.7 657.9,652.2 659.2,652.7 660.0,653.3 660.6,654.1 661.2,654.9 661.7,655.7 662.3,656.3 663.0,656.5 664.1,656.2 665.2,655.2 666.5,653.9 667.8,652.5 669.2,651.2 670.6,650.2 672.2,649.6 674.0,649.1 675.8,648.8 677.6,648.5 679.3,648.1 680.8,647.6 681.8,647.1 682.7,646.7 683.5,646.2 684.3,645.6 685.1,644.8 685.8,643.8 687.4,640.5 688.7,635.8 689.9,630.3 691.1,624.4 692.2,618.6 693.5,613.4 694.7,608.5 695.9,602.9 697.2,597.5 698.4,592.7 699.7,589.4 701.1,588.0 702.1,588.5 703.2,589.9 704.3,592.0 705.3,594.5 706.4,597.0 707.4,599.4 708.5,602.3 709.5,605.5 710.4,608.9 711.4,612.2 712.5,615.0 713.8,617.2 714.8,618.1 715.8,618.7 716.9,619.1 718.0,619.6 719.1,620.1 720.0,621.0 721.1,622.9 721.9,625.3 722.6,627.9 723.3,630.6 724.1,633.0 725.1,634.9 725.9,635.7 726.8,636.3 727.7,636.8 728.6,637.3 729.5,637.9 730.2,638.8 731.1,640.9 731.8,643.7 732.3,646.8 732.8,650.0 733.3,652.9 734.0,655.3 734.6,656.7 735.2,658.2 735.8,659.5 736.5,660.6 737.1,661.4 737.8,661.6 739.0,660.3 740.2,657.1 741.5,652.6 742.7,647.5 744.0,642.2 745.4,637.5 747.0,632.0 748.6,625.5 750.3,618.9 752.1,613.0 753.8,608.8 755.6,607.0 756.7,607.3 757.7,608.3 758.8,609.9 759.9,611.9 760.9,613.9 761.9,615.9 763.1,619.2 764.0,623.3 764.9,627.7 765.8,631.7 766.9,634.7 768.2,636.2 769.1,636.0 770.1,635.2 771.2,633.9 772.3,632.6 773.4,631.6 774.6,631.1 776.0,631.3 777.5,631.9 779.1,632.8 780.7,633.9 782.1,635.1 783.5,636.2 784.7,637.3 785.9,638.4 786.9,639.5 788.0,640.8 788.9,642.2 789.8,643.8 790.8,646.8 791.6,650.7 792.2,654.8 792.8,658.6 793.7,661.5 794.9,662.9 796.1,662.6 797.5,661.4 799.1,659.6 800.6,657.7 802.2,656.1 803.8,655.3 805.1,655.4 806.4,655.9 807.7,656.6 809.0,657.4 810.2,657.8 811.4,657.8 812.8,657.0 814.2,655.7 815.5,654.0 816.7,652.0 817.9,649.8 819.0,647.6 820.4,643.9 821.5,639.5 822.5,634.7 823.5,629.8 824.4,625.2 825.4,621.0 826.2,617.9 827.0,614.6 827.7,611.4 828.5,608.7 829.4,606.7 830.5,605.7 831.2,605.8 832.0,606.5 832.9,607.4 833.7,608.4 834.6,609.2 835.5,609.5 836.5,609.1 837.6,608.1 838.7,606.9 839.9,605.7 840.9,604.8 841.9,604.5 842.9,605.2 843.8,606.6 844.6,608.5 845.4,610.3 846.2,611.6 847.0,612.1 847.9,611.2 848.7,609.0 849.6,606.3 850.4,603.6 851.2,601.5 852.0,600.7 853.1,601.9 854.1,604.8 855.2,609.0 856.2,613.6 857.3,618.3 858.4,622.2 859.4,625.3 860.4,628.4 861.5,631.4 862.5,634.3 863.6,637.2 864.7,640.0 865.7,642.7 866.7,645.8 867.7,648.7 868.8,651.3 869.9,653.2 871.1,654.0 872.1,653.7 873.0,652.6 874.1,651.1 875.1,649.6 876.2,648.3 877.4,647.6 878.6,647.5 879.9,647.6 881.3,648.0 882.6,648.6 883.9,649.3 885.1,650.2 886.6,652.0 887.9,654.7 889.2,657.6 890.4,660.3 891.5,662.3 892.7,662.9 894.6,660.6 896.4,655.0 898.2,647.2 899.8,638.4 901.3,629.7 902.8,622.2 903.9,616.1 904.8,609.8 905.6,603.5 906.5,597.7 907.6,592.8 909.2,589.2 910.1,587.9 911.2,586.7 912.3,585.7 913.4,585.0 914.5,584.7 915.5,584.7 916.9,585.7 918.3,587.9 919.6,590.8 920.9,594.1 922.0,597.5 923.1,600.7 924.1,604.4 924.9,608.4 925.6,612.5 926.3,616.6 927.1,620.3 928.2,623.5 929.1,625.5 930.2,627.6 931.3,629.5 932.4,631.1 933.5,632.1 934.6,632.4 936.1,630.9 937.5,627.2 938.9,622.3 940.3,616.9 941.8,612.0 943.5,608.3 944.7,606.6 945.9,605.0 947.1,603.6 948.4,602.4 949.7,601.4 951.1,600.7 952.3,600.3 953.7,599.9 955.0,599.8 956.4,599.8 957.6,600.1 958.7,600.7 960.0,602.4 960.9,605.1 961.6,608.4 962.3,611.7 963.0,614.8 963.8,617.2 964.5,618.4 965.3,619.5 966.1,620.6 966.9,621.4 967.4,622.0 967.6,622.2" stroke="#c060e0"/>
</g>
<rect x="15" y="72" width="7" height="7" fill="#30e020"/>
<text x="26" y="78.8" font-size="9.5" fill="#88ccf0" textLength="102.0" lengthAdjust="spacingAndGlyphs">USD/CAD(1 day&#160; 1 yr.)</text>
<rect x="140" y="72" width="7" height="7" fill="#f0d020"/>
<text x="148" y="78.8" font-size="9.5" fill="#88ccf0" textLength="42.0" lengthAdjust="spacingAndGlyphs">SMA(10)</text>
<rect x="200" y="72" width="7" height="7" fill="#30e020"/>
<text x="210" y="78.8" font-size="9.5" fill="#88ccf0" textLength="40.0" lengthAdjust="spacingAndGlyphs">SMA(20)</text>
<rect x="262" y="72" width="7" height="7" fill="#f0d020"/>
<text x="270" y="78.8" font-size="9.5" fill="#88ccf0" textLength="94.0" lengthAdjust="spacingAndGlyphs">BLG_UP(20,2,SMA)</text>
<rect x="378" y="72" width="7" height="7" fill="#f0d020"/>
<text x="385" y="78.8" font-size="9.5" fill="#88ccf0" textLength="93.0" lengthAdjust="spacingAndGlyphs">BLG_LW(20,2,SMA)</text>
<rect x="15" y="268" width="7" height="7" fill="#30e020"/>
<text x="26" y="274.8" font-size="9.5" fill="#88ccf0" textLength="49.5" lengthAdjust="spacingAndGlyphs">Fast K(5,5)</text>
<rect x="85" y="268" width="7" height="7" fill="#d060f0"/>
<text x="96" y="274.8" font-size="9.5" fill="#88ccf0" textLength="49.0" lengthAdjust="spacingAndGlyphs">Fast D(5,5)</text>
<rect x="155" y="268" width="7" height="7" fill="#f01010"/>
<text x="165" y="274.8" font-size="9.5" fill="#88ccf0" textLength="17.0" lengthAdjust="spacingAndGlyphs">L20</text>
<rect x="193" y="268" width="7" height="7" fill="#f01010"/>
<text x="203" y="274.8" font-size="9.5" fill="#88ccf0" textLength="17.0" lengthAdjust="spacingAndGlyphs">L80</text>
<rect x="15" y="371.5" width="7" height="7" fill="#f0c010"/>
<text x="26" y="378.3" font-size="9.5" fill="#88ccf0" textLength="34.0" lengthAdjust="spacingAndGlyphs">RSI(14)</text>
<rect x="70" y="371.5" width="7" height="7" fill="#ffffff"/>
<text x="80" y="378.3" font-size="9.5" fill="#88ccf0" textLength="49.0" lengthAdjust="spacingAndGlyphs">OVRSOLD</text>
<rect x="140.5" y="371.5" width="7" height="7" fill="#ffffff"/>
<text x="151" y="378.3" font-size="9.5" fill="#88ccf0" textLength="49.0" lengthAdjust="spacingAndGlyphs">OVRBGHT</text>
<rect x="15" y="474" width="7" height="7" fill="#30e020"/>
<text x="25" y="480.8" font-size="9.5" fill="#88ccf0" textLength="72.0" lengthAdjust="spacingAndGlyphs">MACD(12,26,9)</text>
<rect x="107" y="474" width="7" height="7" fill="#ffffff"/>
<text x="117" y="480.8" font-size="9.5" fill="#88ccf0" textLength="108.5" lengthAdjust="spacingAndGlyphs">MACD_Signal(12,26,9)</text>
<rect x="236" y="474" width="7" height="7" fill="#d060f0"/>
<text x="246" y="480.8" font-size="9.5" fill="#88ccf0" textLength="97.5" lengthAdjust="spacingAndGlyphs">MACD_Hist.(12,26,9)</text>
<rect x="15" y="577" width="7" height="7" fill="#d060f0"/>
<text x="26" y="583.8" font-size="9.5" fill="#88ccf0" textLength="62.5" lengthAdjust="spacingAndGlyphs">Slow K(5,5,5)</text>
<rect x="98" y="577" width="7" height="7" fill="#f0c010"/>
<text x="109" y="583.8" font-size="9.5" fill="#88ccf0" textLength="62.0" lengthAdjust="spacingAndGlyphs">Slow D(5,5,5)</text>
<rect x="181" y="577" width="7" height="7" fill="#f01010"/>
<text x="192" y="583.8" font-size="9.5" fill="#88ccf0" textLength="16.0" lengthAdjust="spacingAndGlyphs">L20</text>
<rect x="219" y="577" width="7" height="7" fill="#f01010"/>
<text x="230" y="583.8" font-size="9.5" fill="#88ccf0" textLength="16.0" lengthAdjust="spacingAndGlyphs">L80</text>
<text x="985" y="118.5" font-size="9.2" fill="#000" stroke="#000" stroke-width="0.2" textLength="30.4" lengthAdjust="spacingAndGlyphs">1.2500</text>
<text x="985" y="154.5" font-size="9.2" fill="#000" stroke="#000" stroke-width="0.2" textLength="30.4" lengthAdjust="spacingAndGlyphs">1.2200</text>
<text x="985" y="190.5" font-size="9.2" fill="#000" stroke="#000" stroke-width="0.2" textLength="30.4" lengthAdjust="spacingAndGlyphs">1.1900</text>
<text x="985" y="225.5" font-size="9.2" fill="#000" stroke="#000" stroke-width="0.2" textLength="30.4" lengthAdjust="spacingAndGlyphs">1.1600</text>
<text x="985" y="261.5" font-size="9.2" fill="#000" stroke="#000" stroke-width="0.2" textLength="30.4" lengthAdjust="spacingAndGlyphs">1.1300</text>
<text x="985" y="275.5" font-size="9.2" fill="#000" stroke="#000" stroke-width="0.2" textLength="30.4" lengthAdjust="spacingAndGlyphs">100.00</text>
<text x="985" y="303.5" font-size="9.2" fill="#000" stroke="#000" stroke-width="0.2" textLength="24.8" lengthAdjust="spacingAndGlyphs">70.00</text>
<text x="985" y="331.5" font-size="9.2" fill="#000" stroke="#000" stroke-width="0.2" textLength="24.8" lengthAdjust="spacingAndGlyphs">40.00</text>
<text x="985" y="358.5" font-size="9.2" fill="#000" stroke="#000" stroke-width="0.2" textLength="36.0" lengthAdjust="spacingAndGlyphs">10.0000</text>
<text x="985" y="391.5" font-size="9.2" fill="#000" stroke="#000" stroke-width="0.2" textLength="24.8" lengthAdjust="spacingAndGlyphs">80.00</text>
<text x="985" y="416.5" font-size="9.2" fill="#000" stroke="#000" stroke-width="0.2" textLength="24.8" lengthAdjust="spacingAndGlyphs">55.00</text>
<text x="985" y="443.5" font-size="9.2" fill="#000" stroke="#000" stroke-width="0.2" textLength="24.8" lengthAdjust="spacingAndGlyphs">30.00</text>
<text x="985" y="467.5" font-size="9.2" fill="#000" stroke="#000" stroke-width="0.2" textLength="30.4" lengthAdjust="spacingAndGlyphs">5.0000</text>
<text x="985" y="485.5" font-size="9.2" fill="#000" stroke="#000" stroke-width="0.2" textLength="30.4" lengthAdjust="spacingAndGlyphs">0.0070</text>
<text x="985" y="513.5" font-size="9.2" fill="#000" stroke="#000" stroke-width="0.2" textLength="30.4" lengthAdjust="spacingAndGlyphs">0.0020</text>
<text x="984" y="541.5" font-size="9.2" fill="#000" stroke="#000" stroke-width="0.2" textLength="34.9" lengthAdjust="spacingAndGlyphs">-0.0030</text>
<text x="984" y="569.5" font-size="9.2" fill="#000" stroke="#000" stroke-width="0.2" textLength="34.9" lengthAdjust="spacingAndGlyphs">-0.0080</text>
<text x="985" y="595.5" font-size="9.2" fill="#000" stroke="#000" stroke-width="0.2" textLength="24.8" lengthAdjust="spacingAndGlyphs">80.00</text>
<text x="985" y="621.5" font-size="9.2" fill="#000" stroke="#000" stroke-width="0.2" textLength="24.8" lengthAdjust="spacingAndGlyphs">55.00</text>
<text x="985" y="646.5" font-size="9.2" fill="#000" stroke="#000" stroke-width="0.2" textLength="24.8" lengthAdjust="spacingAndGlyphs">30.00</text>
<text x="985" y="672.5" font-size="9.2" fill="#000" stroke="#000" stroke-width="0.2" textLength="30.4" lengthAdjust="spacingAndGlyphs">5.0000</text>
<g stroke="#b03030" stroke-width="1" fill="none" shape-rendering="crispEdges">
<path d="M983.5,74 V83 M1016.5,74 V83"/>
<path d="M988,74.5 H992 M992.5,74 V79"/>
<path d="M994,74.5 H998 M998.5,74 V79"/>
<path d="M1000,74.5 H1004 M1004.5,74 V79"/>
<path d="M1006,74.5 H1010 M1010.5,74 V79"/>
<path d="M1012,74.5 V80"/>
</g>
<text x="984.5" y="83" font-size="8.8" fill="#000" stroke="#000" stroke-width="0.2" textLength="31" lengthAdjust="spacingAndGlyphs">1.2800</text>
<rect x="975" y="213" width="49" height="12" fill="#0a8262"/>
<rect x="975" y="213" width="49" height="1" fill="#b0f0e0"/>
<rect x="974" y="213" width="1" height="12" fill="#c0c0c0"/>
<text x="985" y="222.5" font-size="9.2" fill="#e8fff8" textLength="30.4" lengthAdjust="spacingAndGlyphs">1.1626</text>
<rect x="975" y="330" width="49" height="12" fill="#0a8262"/>
<rect x="975" y="330" width="49" height="1" fill="#b0f0e0"/>
<rect x="974" y="330" width="1" height="12" fill="#c0c0c0"/>
<text x="985" y="339.5" font-size="9.2" fill="#e8fff8" textLength="24.8" lengthAdjust="spacingAndGlyphs">30.41</text>
<rect x="975" y="408" width="49" height="12" fill="#0a8262"/>
<rect x="975" y="408" width="49" height="1" fill="#b0f0e0"/>
<rect x="974" y="408" width="1" height="12" fill="#c0c0c0"/>
<text x="985" y="417.5" font-size="9.2" fill="#e8fff8" textLength="24.8" lengthAdjust="spacingAndGlyphs">54.07</text>
<rect x="975" y="492" width="49" height="11" fill="#0a8262"/>
<rect x="975" y="492" width="49" height="1" fill="#b0f0e0"/>
<rect x="974" y="492" width="1" height="11" fill="#c0c0c0"/>
<text x="985" y="501.0" font-size="9.2" fill="#e8fff8" textLength="30.4" lengthAdjust="spacingAndGlyphs">0.0043</text>
<rect x="975" y="616" width="49" height="12" fill="#0a8262"/>
<rect x="975" y="616" width="49" height="1" fill="#b0f0e0"/>
<rect x="974" y="616" width="1" height="12" fill="#c0c0c0"/>
<text x="985" y="625.5" font-size="9.2" fill="#e8fff8" textLength="24.8" lengthAdjust="spacingAndGlyphs">50.59</text>
<text x="74.0" y="691.3" font-size="9.6" fill="#000" stroke="#000" stroke-width="0.2" textLength="27" lengthAdjust="spacingAndGlyphs">05/02</text>
<text x="155.0" y="691.3" font-size="9.6" fill="#000" stroke="#000" stroke-width="0.2" textLength="27" lengthAdjust="spacingAndGlyphs">06/01</text>
<text x="236.0" y="691.3" font-size="9.6" fill="#000" stroke="#000" stroke-width="0.2" textLength="27" lengthAdjust="spacingAndGlyphs">07/01</text>
<text x="313.0" y="691.3" font-size="9.6" fill="#000" stroke="#000" stroke-width="0.2" textLength="27" lengthAdjust="spacingAndGlyphs">08/01</text>
<text x="398.0" y="691.3" font-size="9.6" fill="#000" stroke="#000" stroke-width="0.2" textLength="27" lengthAdjust="spacingAndGlyphs">09/01</text>
<text x="479.0" y="691.3" font-size="9.6" fill="#000" stroke="#000" stroke-width="0.2" textLength="27" lengthAdjust="spacingAndGlyphs">10/03</text>
<text x="556.0" y="691.3" font-size="9.6" fill="#000" stroke="#000" stroke-width="0.2" textLength="27" lengthAdjust="spacingAndGlyphs">11/01</text>
<text x="637.0" y="691.3" font-size="9.6" fill="#000" stroke="#000" stroke-width="0.2" textLength="27" lengthAdjust="spacingAndGlyphs">12/01</text>
<text x="718.0" y="691.3" font-size="9.6" fill="#000" stroke="#000" stroke-width="0.2" textLength="27" lengthAdjust="spacingAndGlyphs">01/02</text>
<text x="799.0" y="691.3" font-size="9.6" fill="#000" stroke="#000" stroke-width="0.2" textLength="27" lengthAdjust="spacingAndGlyphs">02/01</text>
<text x="872.0" y="691.3" font-size="9.6" fill="#000" stroke="#000" stroke-width="0.2" textLength="27" lengthAdjust="spacingAndGlyphs">03/01</text>
<text x="718" y="700.3" font-size="9.6" fill="#000" stroke="#000" stroke-width="0.2" textLength="23" lengthAdjust="spacingAndGlyphs">2006</text>
<g stroke="#b82828" stroke-width="1" fill="none" shape-rendering="crispEdges">
<path d="M959.5,693 V700 M963.5,693 V700 M960,692.5 H963 M960,700.5 H963"/>
<path d="M965,692.5 H969 M969.5,693 V700 M965,700.5 H969 M966,696.5 H969"/>
<path d="M970.8,700.5 L973.8,692.5" shape-rendering="geometricPrecision"/>
<path d="M975,692.5 H979 M979.5,693 V700 M975,700.5 H979 M976,696.5 H979"/>
<path d="M985.5,692 V701"/>
</g>
<rect x="0" y="703" width="1024" height="41" fill="#d4d0c8"/>
<rect x="0" y="703" width="1024" height="1" fill="#fbfaf6"/>
<rect x="2" y="705" width="99" height="18" fill="#d4d0c8"/>
<path d="M2.5,723 V705.5 H101" stroke="#808080" fill="none"/>
<path d="M100.5,706 V722.5" stroke="#ffffff" fill="none"/>
<text x="51.5" y="718" font-size="11" font-weight="bold" fill="#000" stroke="#000" stroke-width="0.15" text-anchor="middle">03/31/2006</text>
<rect x="103" y="705" width="69" height="18" fill="#d4d0c8"/>
<path d="M103.5,723 V705.5 H172" stroke="#808080" fill="none"/>
<path d="M171.5,706 V722.5" stroke="#ffffff" fill="none"/>
<text x="137.5" y="718" font-size="11" font-weight="bold" fill="#000" stroke="#000" stroke-width="0.15" text-anchor="middle">H: 1.1631</text>
<rect x="174" y="705" width="69" height="18" fill="#d4d0c8"/>
<path d="M174.5,723 V705.5 H243" stroke="#808080" fill="none"/>
<path d="M242.5,706 V722.5" stroke="#ffffff" fill="none"/>
<text x="208.5" y="718" font-size="11" font-weight="bold" fill="#000" stroke="#000" stroke-width="0.15" text-anchor="middle">L: 1.1574</text>
<rect x="245" y="705" width="69" height="18" fill="#d4d0c8"/>
<path d="M245.5,723 V705.5 H314" stroke="#808080" fill="none"/>
<path d="M313.5,706 V722.5" stroke="#ffffff" fill="none"/>
<text x="279.5" y="718" font-size="11" font-weight="bold" fill="#e01010" stroke="#e01010" stroke-width="0.15" text-anchor="middle">C: 1.1626</text>
<rect x="316" y="705" width="89" height="18" fill="#d4d0c8"/>
<path d="M316.5,723 V705.5 H405" stroke="#808080" fill="none"/>
<path d="M404.5,706 V722.5" stroke="#ffffff" fill="none"/>
<text x="360.5" y="718" font-size="11" font-weight="bold" fill="#000" stroke="#000" stroke-width="0.15" text-anchor="middle">PV: 1.2822</text>
<rect x="406" y="705" width="618" height="18" fill="#ebe9e4"/>
<rect x="406" y="705" width="618" height="1" fill="#707070"/><rect x="406" y="722" width="618" height="1" fill="#404040"/>
<rect x="406" y="706" width="16" height="16" fill="#d4d0c8"/>
<path d="M406.5,721.5 V706.5 H421.5" stroke="#ffffff" fill="none"/>
<path d="M421.5,706.5 V721.5 H406.5" stroke="#404040" fill="none"/>
<rect x="1008" y="706" width="16" height="16" fill="#d4d0c8"/>
<path d="M1008.5,721.5 V706.5 H1023.5" stroke="#ffffff" fill="none"/>
<path d="M1023.5,706.5 V721.5 H1008.5" stroke="#404040" fill="none"/>
<path d="M411,714 L415,710 V718 Z" fill="#808080" shape-rendering="geometricPrecision"/>
<path d="M1017,714 L1013,710 V718 Z" fill="#808080" shape-rendering="geometricPrecision"/>
<rect x="0" y="723" width="406" height="1" fill="#808080"/>
<rect x="0" y="724" width="1" height="15" fill="#808080"/>
<rect x="0" y="739" width="1024" height="2" fill="#fbfaf4"/>
<text x="3" y="736" font-size="12" fill="#000" textLength="118" lengthAdjust="spacingAndGlyphs">Warning: Applet Window</text>
</svg></body></html>
